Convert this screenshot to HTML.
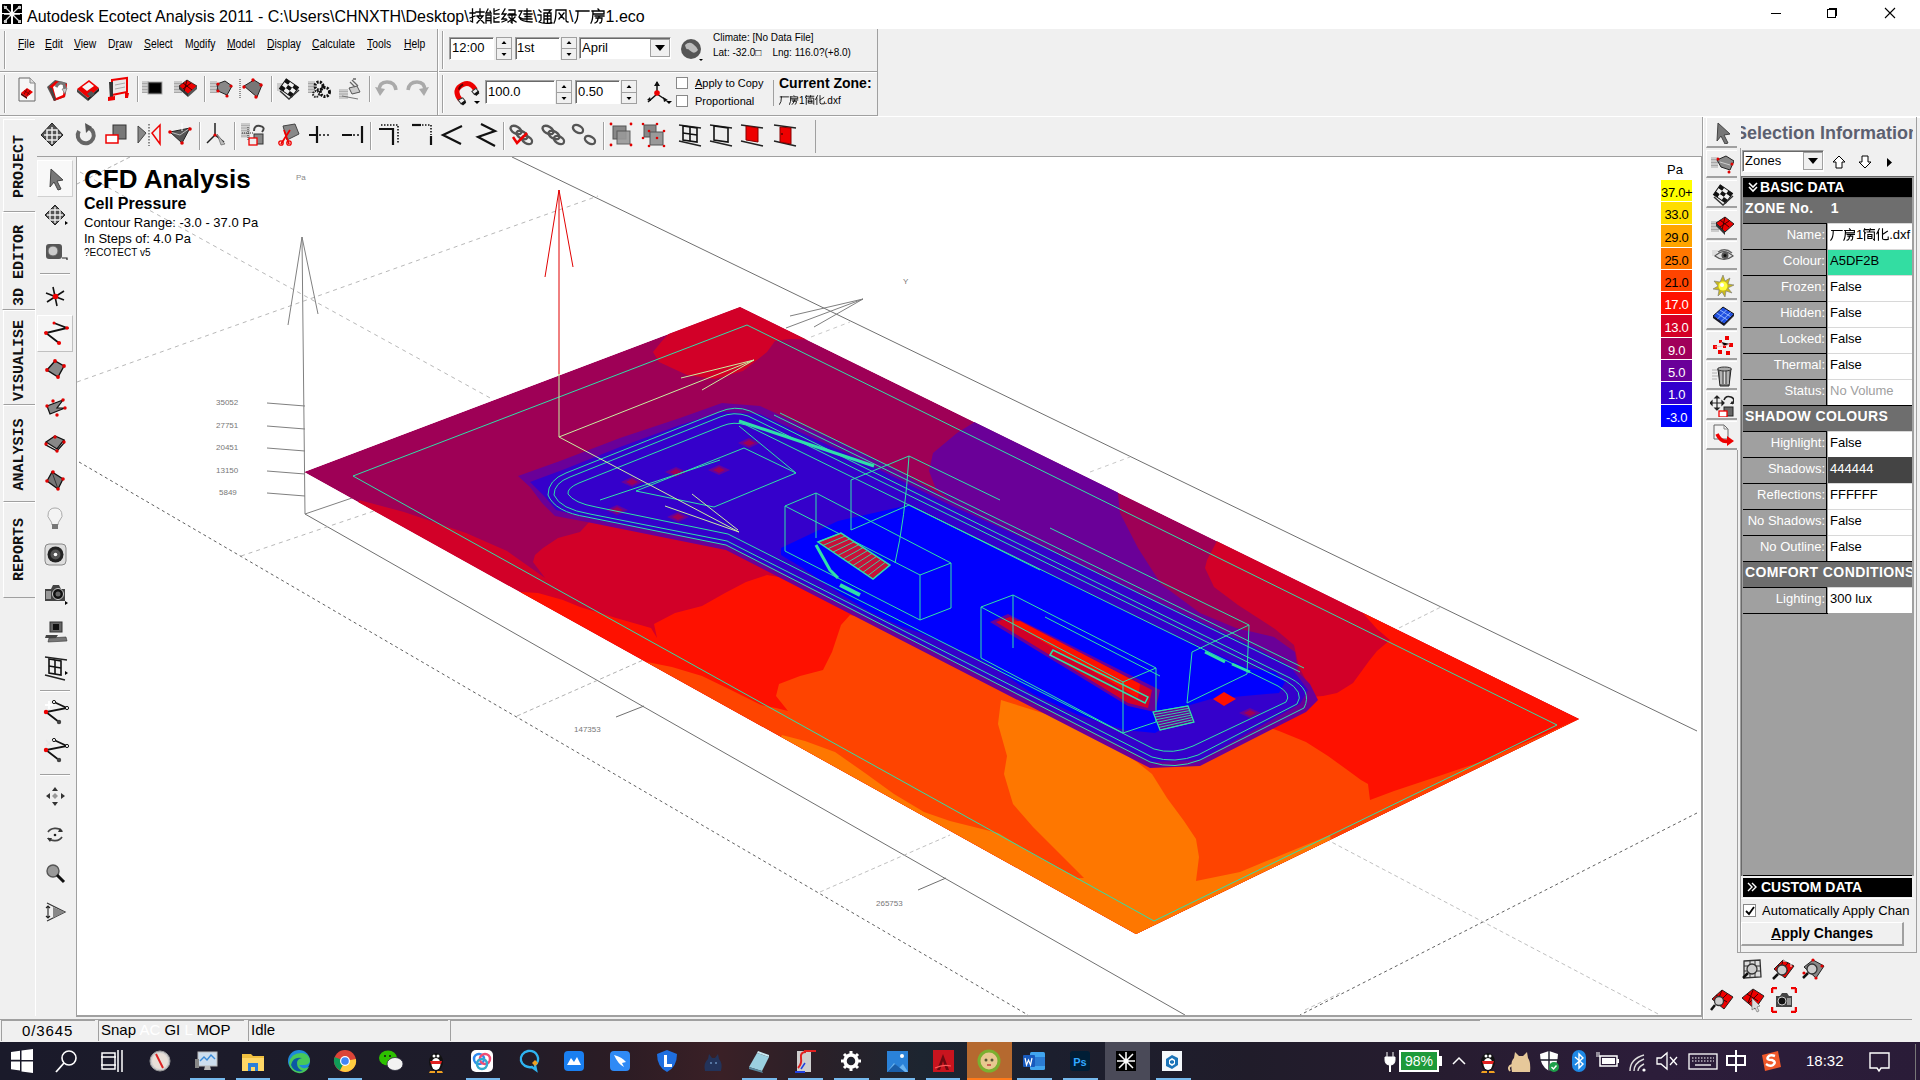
<!DOCTYPE html>
<html><head><meta charset="utf-8">
<style>
*{margin:0;padding:0;box-sizing:border-box}
html,body{width:1920px;height:1080px;overflow:hidden;background:#f0f0f0;font-family:"Liberation Sans",sans-serif;color:#000}
.a{position:absolute}
.t{position:absolute;white-space:nowrap;line-height:1}
.hl{position:absolute;height:1px}
.vl{position:absolute;width:1px}
.inp{position:absolute;background:#fff;border-top:1px solid #a0a0a0;border-left:1px solid #a0a0a0;border-bottom:1px solid #fff;border-right:1px solid #fff;box-shadow:inset 1px 1px 0 #696969}
.spin{position:absolute;background:#f0f0f0;border:1px solid #a0a0a0}
.row{position:absolute;left:1743px;width:169px;height:26px}
.lab{position:absolute;left:0;top:0;width:84px;height:26px;background:#a0a0a0;border-top:1px solid #000;border-right:1px solid #000;color:#fff;font-size:13px;text-align:right;padding-right:1px;line-height:22px}
.val{position:absolute;left:85px;top:0;width:84px;height:26px;background:#fff;border-top:1px solid #d8d8d8;font-size:13px;line-height:22px;padding-left:2px}
.sec{position:absolute;left:1743px;width:169px;height:26px;background:#6e6e6e;border-top:1px solid #000;color:#fff;font-weight:bold;font-size:14px;line-height:20px;padding-left:2px;letter-spacing:0.4px;white-space:nowrap;overflow:hidden}
</style></head><body>
<!-- TITLE BAR -->
<div class="a" style="left:0;top:0;width:1920px;height:29px;background:#fff"></div>
<svg class="a" style="left:2px;top:4px" width="20" height="20" viewBox="0 0 20 20"><rect x="0" y="0" width="9" height="9" rx="0.6" fill="#000"/><rect x="11" y="0" width="9" height="9" rx="0.6" fill="#000"/><rect x="0" y="10" width="9" height="10" rx="0.6" fill="#000"/><rect x="11" y="10" width="9" height="10" rx="0.6" fill="#000"/><path d="M2 2L18 18M18 2L2 18" stroke="#ddd" stroke-width="1.2"/><path d="M10 2v16M2 10h16" stroke="#fff" stroke-width="1.6"/><rect x="2" y="2" width="3" height="3" fill="#ccc"/><rect x="16" y="2" width="3" height="3" fill="#ccc"/><rect x="2" y="16" width="3" height="3" fill="#ccc"/><rect x="16" y="16" width="3" height="3" fill="#ccc"/><circle cx="10" cy="10" r="2.5" fill="#fff"/></svg>
<div class="t" style="left:27px;top:8px;font-size:16px;">Autodesk Ecotect Analysis 2011 - C:\Users\CHNXTH\Desktop\<svg style="display:inline-block;vertical-align:-1.9px" width="16" height="16" viewBox="0 0 16 16"><path d="M1 5h5M3.5 1v13l-2-1M1 10l5-2M7 4h8M11 1v6M8 8h6l-6 7M9 9l6 6" fill="none" stroke="#000" stroke-width="1.30" stroke-linecap="square"/></svg><svg style="display:inline-block;vertical-align:-1.9px" width="16" height="16" viewBox="0 0 16 16"><path d="M3 1l-2 4h5l-1-2M1 7h5v8M1 7v8M1 10h5M1 12.5h5M9 1v5h5M9 3.5l5-2M9 9v5h5M9 11l5-2" fill="none" stroke="#000" stroke-width="1.30" stroke-linecap="square"/></svg><svg style="display:inline-block;vertical-align:-1.9px" width="16" height="16" viewBox="0 0 16 16"><path d="M4 1L1 6h4L1 11h4M1 14l5-2M8 2h6v4H8M7 7h8M11 7v8l-1-1M8 9l2 2M14 9l-3 3M7 14l3-2M15 14l-3-2" fill="none" stroke="#000" stroke-width="1.30" stroke-linecap="square"/></svg><svg style="display:inline-block;vertical-align:-1.9px" width="16" height="16" viewBox="0 0 16 16"><path d="M2 3h3L2 9l4 2M2 9q2 5 13 5M7 3h7M10 1v11M7 6h8M8 8.5h6M7 11h8" fill="none" stroke="#000" stroke-width="1.30" stroke-linecap="square"/></svg>\<svg style="display:inline-block;vertical-align:-1.9px" width="16" height="16" viewBox="0 0 16 16"><path d="M2 2l2 2M1 7h3v5l-2 2q4 2 13 1M7 2h7l-2 2M7 5h7v9M7 5v9M7 8h7M7 11h7M10.5 5v9" fill="none" stroke="#000" stroke-width="1.30" stroke-linecap="square"/></svg><svg style="display:inline-block;vertical-align:-1.9px" width="16" height="16" viewBox="0 0 16 16"><path d="M3 2h10v10q0 2 2 2M3 2q0 10-2 13M6 5l5 6M11 5l-5 6" fill="none" stroke="#000" stroke-width="1.30" stroke-linecap="square"/></svg>\<svg style="display:inline-block;vertical-align:-1.9px" width="16" height="16" viewBox="0 0 16 16"><path d="M2 3h13M4 3q0 9-3 12" fill="none" stroke="#000" stroke-width="1.30" stroke-linecap="square"/></svg><svg style="display:inline-block;vertical-align:-1.9px" width="16" height="16" viewBox="0 0 16 16"><path d="M8 1l1 1M2 3h12v3H3M3 3q0 9-2 12M5 8h9M9 8v1M6 10h6q0 5-2 5M8 10q0 4-3 5" fill="none" stroke="#000" stroke-width="1.30" stroke-linecap="square"/></svg>1.eco</div>
<div class="a" style="left:1771px;top:13px;width:10px;height:1px;background:#000"></div>
<div class="a" style="left:1827px;top:9px;width:9px;height:9px;border:1px solid #000"></div>
<div class="a" style="left:1829px;top:8px;width:8px;height:8px;border-top:1px solid #000;border-right:1px solid #000"></div>
<svg class="a" style="left:1884px;top:7px" width="12" height="12"><path d="M1 1L11 11M11 1L1 11" stroke="#000" stroke-width="1.1"/></svg>


<!-- TOOLBARS -->
<div class="hl" style="left:0;top:71px;width:878px;background:#a0a0a0"></div>
<div class="hl" style="left:0;top:72px;width:877px;background:#fff"></div>
<div class="hl" style="left:0;top:115px;width:878px;background:#a0a0a0"></div>
<div class="hl" style="left:0;top:116px;width:1920px;background:#fff"></div>
<!-- grips -->
<div class="vl" style="left:4px;top:31px;height:38px;background:#a0a0a0"></div><div class="vl" style="left:5px;top:31px;height:38px;background:#fff"></div>
<div class="vl" style="left:4px;top:75px;height:38px;background:#a0a0a0"></div><div class="vl" style="left:5px;top:75px;height:38px;background:#fff"></div>
<div class="vl" style="left:437px;top:29px;height:86px;background:#a0a0a0"></div><div class="vl" style="left:438px;top:29px;height:86px;background:#fff"></div>
<div class="vl" style="left:442px;top:31px;height:38px;background:#a0a0a0"></div><div class="vl" style="left:443px;top:31px;height:38px;background:#fff"></div>
<div class="vl" style="left:442px;top:75px;height:38px;background:#a0a0a0"></div><div class="vl" style="left:443px;top:75px;height:38px;background:#fff"></div>
<div class="vl" style="left:877px;top:29px;height:86px;background:#a0a0a0"></div>
<!-- menu -->
<div class="t" style="left:18px;top:38px;font-size:12px;transform:scaleX(0.86);transform-origin:0 0;word-spacing:0"><u>F</u>ile</div>
<div class="t" style="left:45px;top:38px;font-size:12px;transform:scaleX(0.86);transform-origin:0 0"><u>E</u>dit</div>
<div class="t" style="left:74px;top:38px;font-size:12px;transform:scaleX(0.86);transform-origin:0 0"><u>V</u>iew</div>
<div class="t" style="left:108px;top:38px;font-size:12px;transform:scaleX(0.86);transform-origin:0 0">D<u>r</u>aw</div>
<div class="t" style="left:144px;top:38px;font-size:12px;transform:scaleX(0.86);transform-origin:0 0"><u>S</u>elect</div>
<div class="t" style="left:185px;top:38px;font-size:12px;transform:scaleX(0.86);transform-origin:0 0">M<u>o</u>dify</div>
<div class="t" style="left:227px;top:38px;font-size:12px;transform:scaleX(0.86);transform-origin:0 0"><u>M</u>odel</div>
<div class="t" style="left:267px;top:38px;font-size:12px;transform:scaleX(0.86);transform-origin:0 0"><u>D</u>isplay</div>
<div class="t" style="left:312px;top:38px;font-size:12px;transform:scaleX(0.86);transform-origin:0 0"><u>C</u>alculate</div>
<div class="t" style="left:367px;top:38px;font-size:12px;transform:scaleX(0.86);transform-origin:0 0"><u>T</u>ools</div>
<div class="t" style="left:404px;top:38px;font-size:12px;transform:scaleX(0.86);transform-origin:0 0"><u>H</u>elp</div>
<!-- row1 controls -->
<div class="inp" style="left:449px;top:37px;width:45px;height:23px"></div><div class="t" style="left:452px;top:41px;font-size:13px">12:00</div>
<div class="spin" style="left:496px;top:37px;width:16px;height:23px"></div><div class="hl" style="left:497px;top:48px;width:14px;background:#a0a0a0"></div>
<div class="inp" style="left:515px;top:37px;width:45px;height:23px"></div><div class="t" style="left:517px;top:41px;font-size:13px">1st</div>
<div class="spin" style="left:561px;top:37px;width:16px;height:23px"></div><div class="hl" style="left:562px;top:48px;width:14px;background:#a0a0a0"></div>
<div class="inp" style="left:579px;top:37px;width:92px;height:22px"></div><div class="t" style="left:582px;top:41px;font-size:13px">April</div>
<div class="a" style="left:650px;top:39px;width:20px;height:18px;background:#f0f0f0;border:1px solid #a0a0a0"></div>
<svg class="a" style="left:655px;top:45px" width="10" height="6"><path d="M0 0H10L5 6Z" fill="#000"/></svg>
<svg class="a" style="left:680px;top:38px" width="24" height="26" viewBox="0 0 24 26"><circle cx="11" cy="11" r="10" fill="#555"/><path d="M5 7q4-4 8-1t5 6q-3 4-6 2t-4-3q-2 1-3-4z" fill="#bbb"/><path d="M19 21h4l-2 2z" fill="#000"/></svg>
<div class="t" style="left:713px;top:33px;font-size:10px">Climate: [No Data File]</div>
<div class="t" style="left:713px;top:48px;font-size:10px">Lat: -32.0&#9633;&nbsp;&nbsp;&nbsp; Lng: 116.0?(+8.0)</div>
<!-- row2 controls -->
<div class="inp" style="left:485px;top:80px;width:70px;height:24px"></div><div class="t" style="left:488px;top:85px;font-size:13px">100.0</div>
<div class="spin" style="left:556px;top:80px;width:16px;height:24px"></div><div class="hl" style="left:557px;top:92px;width:14px;background:#a0a0a0"></div>
<div class="inp" style="left:575px;top:80px;width:45px;height:24px"></div><div class="t" style="left:578px;top:85px;font-size:13px">0.50</div>
<div class="spin" style="left:621px;top:80px;width:16px;height:24px"></div><div class="hl" style="left:622px;top:92px;width:14px;background:#a0a0a0"></div>
<div class="a" style="left:676px;top:77px;width:12px;height:12px;background:#fff;border:1px solid #888"></div>
<div class="a" style="left:676px;top:95px;width:12px;height:12px;background:#fff;border:1px solid #888"></div>
<div class="t" style="left:695px;top:78px;font-size:11px"><u>A</u>pply to Copy</div>
<div class="t" style="left:695px;top:96px;font-size:11px">Proportional</div>
<div class="vl" style="left:773px;top:80px;height:26px;background:#a0a0a0"></div>
<div class="t" style="left:779px;top:76px;font-size:14px;font-weight:bold">Current Zone:</div>
<div class="t" style="left:779px;top:95px;font-size:10px"><svg style="display:inline-block;vertical-align:-1.2px" width="10" height="10" viewBox="0 0 16 16"><path d="M2 3h13M4 3q0 9-3 12" fill="none" stroke="#000" stroke-width="1.36" stroke-linecap="square"/></svg><svg style="display:inline-block;vertical-align:-1.2px" width="10" height="10" viewBox="0 0 16 16"><path d="M8 1l1 1M2 3h12v3H3M3 3q0 9-2 12M5 8h9M9 8v1M6 10h6q0 5-2 5M8 10q0 4-3 5" fill="none" stroke="#000" stroke-width="1.36" stroke-linecap="square"/></svg>1<svg style="display:inline-block;vertical-align:-1.2px" width="10" height="10" viewBox="0 0 16 16"><path d="M2 1l-1 3M2 2h5M9 1l-1 3M9 2h5M2 5v10M2 5l1 1M5 5h9v10l-1-1M6 8h5v5H6zM6 10.5h5" fill="none" stroke="#000" stroke-width="1.36" stroke-linecap="square"/></svg><svg style="display:inline-block;vertical-align:-1.2px" width="10" height="10" viewBox="0 0 16 16"><path d="M4 1L1 7M3 5v10M8 1v12q0 2 7 1v-3M14 4l-6 4" fill="none" stroke="#000" stroke-width="1.36" stroke-linecap="square"/></svg>.dxf</div>
<!-- row3 -->
<div class="hl" style="left:37px;top:156px;width:1663px;background:#a0a0a0"></div>
<div class="vl" style="left:815px;top:120px;height:33px;background:#a0a0a0"></div>


<svg class="a" style="left:13px;top:76px" width="26" height="26" viewBox="0 0 26 26"><path d="M6 2h11l5 5v18H6z" fill="#f6f6f6" stroke="#666"/><path d="M17 2v5h5" fill="#ddd" stroke="#888"/><path d="M8 17l6-5 6 4-6 5z" fill="#e00"/><path d="M8 17l6 4v2l-6-4z" fill="#500"/><path d="M11 14.5l6 4M14 13l-3 5.5M17 14.5l-3 5" stroke="#600" stroke-width="0.8"/></svg>
<svg class="a" style="left:44px;top:76px" width="26" height="26" viewBox="0 0 26 26"><path d="M3 11l8-7 12 3-2 14-11 4z" fill="#555"/><path d="M5 11l7-6 11 3-2 13-11 4z" fill="#e00"/><path d="M9 11l5-4 7 2-2 10-7 3z" fill="#fff"/><path d="M5 11l5 14 2-1-4-12z" fill="#444"/><path d="M12 11q3-6 8-3l1 6" fill="none" stroke="#777" stroke-width="3"/><path d="M18 13l5-1-2 6z" fill="#ccc" stroke="#666" stroke-width="0.6"/></svg>
<svg class="a" style="left:75px;top:76px" width="26" height="26" viewBox="0 0 26 26"><path d="M2 13l12-9 10 8-11 10z" fill="#e00"/><path d="M2 13l11 9v3L2 16z" fill="#444"/><path d="M13 22l11-10v3L13 25z" fill="#222"/><path d="M7 11l7-5 5 4-7 5z" fill="#f4f4f4"/><path d="M12 18l4-3 4 3-4 3z" fill="#555"/></svg>
<svg class="a" style="left:106px;top:76px" width="26" height="26" viewBox="0 0 26 26"><path d="M6 4l15-2v14L6 19z" fill="#e8e8e8" stroke="#e00" stroke-width="2"/><path d="M3 6h4v18H4z" fill="#333"/><path d="M2 21l7-1v4l-7 1z" fill="#e00"/><path d="M19 17h4l-1 5h-3z" fill="#e00"/><path d="M9 9l10-2M9 13l10-2" stroke="#aaa"/></svg>
<svg class="a" style="left:141px;top:76px" width="26" height="26" viewBox="0 0 26 26"><line x1="1" y1="6.0" x2="8" y2="6.0" stroke="#777" stroke-width="0.6"/><line x1="1" y1="7.5" x2="8" y2="7.5" stroke="#777" stroke-width="0.6"/><line x1="1" y1="9.0" x2="8" y2="9.0" stroke="#777" stroke-width="0.6"/><line x1="1" y1="10.5" x2="8" y2="10.5" stroke="#777" stroke-width="0.6"/><line x1="1" y1="12.0" x2="8" y2="12.0" stroke="#777" stroke-width="0.6"/><line x1="1" y1="13.5" x2="8" y2="13.5" stroke="#777" stroke-width="0.6"/><line x1="1" y1="15.0" x2="8" y2="15.0" stroke="#777" stroke-width="0.6"/><line x1="1" y1="16.5" x2="8" y2="16.5" stroke="#777" stroke-width="0.6"/><rect x="7" y="6" width="14" height="12" fill="#111" stroke="#aaa"/><rect x="9" y="8" width="10" height="8" fill="#000"/></svg>
<svg class="a" style="left:173px;top:76px" width="26" height="26" viewBox="0 0 26 26"><line x1="1" y1="6.0" x2="9" y2="6.0" stroke="#777" stroke-width="0.6"/><line x1="1" y1="7.5" x2="9" y2="7.5" stroke="#777" stroke-width="0.6"/><line x1="1" y1="9.0" x2="9" y2="9.0" stroke="#777" stroke-width="0.6"/><line x1="1" y1="10.5" x2="9" y2="10.5" stroke="#777" stroke-width="0.6"/><line x1="1" y1="12.0" x2="9" y2="12.0" stroke="#777" stroke-width="0.6"/><line x1="1" y1="13.5" x2="9" y2="13.5" stroke="#777" stroke-width="0.6"/><line x1="1" y1="15.0" x2="9" y2="15.0" stroke="#777" stroke-width="0.6"/><line x1="1" y1="16.5" x2="9" y2="16.5" stroke="#777" stroke-width="0.6"/><path d="M6 10l8-6 10 6-9 8z" fill="#e00" stroke="#222" stroke-width="0.8"/><path d="M10 7l9 7M14 4l-3 12M18 7l-8 6" stroke="#400" stroke-width="1"/><path d="M6 10l9 8 0 3-9-8z" fill="#333"/><path d="M15 18l9-8v3l-9 8z" fill="#555"/></svg>
<svg class="a" style="left:209px;top:76px" width="26" height="26" viewBox="0 0 26 26"><line x1="1" y1="6.0" x2="8" y2="6.0" stroke="#777" stroke-width="0.6"/><line x1="1" y1="7.5" x2="8" y2="7.5" stroke="#777" stroke-width="0.6"/><line x1="1" y1="9.0" x2="8" y2="9.0" stroke="#777" stroke-width="0.6"/><line x1="1" y1="10.5" x2="8" y2="10.5" stroke="#777" stroke-width="0.6"/><line x1="1" y1="12.0" x2="8" y2="12.0" stroke="#777" stroke-width="0.6"/><line x1="1" y1="13.5" x2="8" y2="13.5" stroke="#777" stroke-width="0.6"/><line x1="1" y1="15.0" x2="8" y2="15.0" stroke="#777" stroke-width="0.6"/><line x1="1" y1="16.5" x2="8" y2="16.5" stroke="#777" stroke-width="0.6"/><path d="M8 8l8-3 7 5-5 9-9-4z" fill="#888" stroke="#222"/><path d="M8 15l1-7" stroke="#333"/><circle cx="9" cy="8" r="1.6" fill="#e00000"/><circle cx="22" cy="10" r="1.6" fill="#e00000"/><circle cx="18" cy="20" r="1.6" fill="#e00000"/><circle cx="9" cy="15" r="1.6" fill="#e00000"/></svg>
<svg class="a" style="left:239px;top:76px" width="26" height="26" viewBox="0 0 26 26"><path d="M1 3v20" stroke="#333" stroke-dasharray="1 1"/><path d="M5 10l10-6 8 5-5 12z" fill="#777" stroke="#222"/><circle cx="5" cy="11" r="1.7" fill="#e00000"/><circle cx="14" cy="4" r="1.7" fill="#e00000"/><circle cx="22" cy="9" r="1.7" fill="#e00000"/><circle cx="17" cy="21" r="1.7" fill="#e00000"/></svg>
<svg class="a" style="left:276px;top:76px" width="26" height="26" viewBox="0 0 26 26"><path d="M1 8h6M1 10h5M1 12h6M1 14h5" stroke="#888" stroke-width="0.7"/><g transform="translate(13,12) rotate(35) scale(1,0.8)"><rect x="-7.5" y="-7.5" width="5" height="5" fill="#111"/><rect x="-2.5" y="-7.5" width="5" height="5" fill="#f0f0f0"/><rect x="2.5" y="-7.5" width="5" height="5" fill="#111"/><rect x="-7.5" y="-2.5" width="5" height="5" fill="#f0f0f0"/><rect x="-2.5" y="-2.5" width="5" height="5" fill="#111"/><rect x="2.5" y="-2.5" width="5" height="5" fill="#f0f0f0"/><rect x="-7.5" y="2.5" width="5" height="5" fill="#111"/><rect x="-2.5" y="2.5" width="5" height="5" fill="#f0f0f0"/><rect x="2.5" y="2.5" width="5" height="5" fill="#111"/><rect x="-7.5" y="-7.5" width="15" height="15" fill="none" stroke="#111" stroke-width="1"/></g><path d="M4 15l9 8 10-9" stroke="#333" stroke-width="1.5" fill="none"/></svg>
<svg class="a" style="left:307px;top:76px" width="26" height="26" viewBox="0 0 26 26"><line x1="1" y1="6.0" x2="8" y2="6.0" stroke="#777" stroke-width="0.6"/><line x1="1" y1="7.5" x2="8" y2="7.5" stroke="#777" stroke-width="0.6"/><line x1="1" y1="9.0" x2="8" y2="9.0" stroke="#777" stroke-width="0.6"/><line x1="1" y1="10.5" x2="8" y2="10.5" stroke="#777" stroke-width="0.6"/><line x1="1" y1="12.0" x2="8" y2="12.0" stroke="#777" stroke-width="0.6"/><line x1="1" y1="13.5" x2="8" y2="13.5" stroke="#777" stroke-width="0.6"/><line x1="1" y1="15.0" x2="8" y2="15.0" stroke="#777" stroke-width="0.6"/><line x1="1" y1="16.5" x2="8" y2="16.5" stroke="#777" stroke-width="0.6"/><circle cx="12" cy="10" r="4" fill="none" stroke="#111" stroke-width="3" stroke-dasharray="2 1.2"/><circle cx="18" cy="16" r="4.5" fill="none" stroke="#111" stroke-width="3" stroke-dasharray="2 1.2"/><circle cx="9" cy="18" r="3" fill="none" stroke="#222" stroke-width="2" stroke-dasharray="1.5 1"/></svg>
<svg class="a" style="left:338px;top:76px" width="26" height="26" viewBox="0 0 26 26"><line x1="1" y1="14.0" x2="10" y2="14.0" stroke="#777" stroke-width="0.6"/><line x1="1" y1="15.6" x2="10" y2="15.6" stroke="#777" stroke-width="0.6"/><line x1="1" y1="17.2" x2="10" y2="17.2" stroke="#777" stroke-width="0.6"/><line x1="1" y1="18.8" x2="10" y2="18.8" stroke="#777" stroke-width="0.6"/><line x1="1" y1="20.4" x2="10" y2="20.4" stroke="#777" stroke-width="0.6"/><line x1="1" y1="22.0" x2="10" y2="22.0" stroke="#777" stroke-width="0.6"/><path d="M11 12l8-2 3 6-8 2z" fill="#ccc" stroke="#555"/><path d="M14 4l6 6M12 6l5 5M15 3h3" stroke="#666" stroke-width="1.3"/><path d="M4 20l16 3" stroke="#777"/></svg>
<svg class="a" style="left:374px;top:76px" width="26" height="26" viewBox="0 0 26 26"><path d="M5 15q0-9 8-9q8 0 9 8" fill="none" stroke="#aaa" stroke-width="3.5"/><path d="M1 11l5 9 5-7z" fill="#aaa"/></svg>
<svg class="a" style="left:404px;top:76px" width="26" height="26" viewBox="0 0 26 26"><path d="M21 15q0-9-8-9q-8 0-9 8" fill="none" stroke="#aaa" stroke-width="3.5"/><path d="M25 11l-5 9-5-7z" fill="#aaa"/></svg>
<div class="vl" style="left:137px;top:76px;height:26px;background:#a0a0a0"></div><div class="vl" style="left:138px;top:76px;height:26px;background:#fff"></div>
<div class="vl" style="left:204px;top:76px;height:26px;background:#a0a0a0"></div><div class="vl" style="left:205px;top:76px;height:26px;background:#fff"></div>
<div class="vl" style="left:271px;top:76px;height:26px;background:#a0a0a0"></div><div class="vl" style="left:272px;top:76px;height:26px;background:#fff"></div>
<div class="vl" style="left:369px;top:76px;height:26px;background:#a0a0a0"></div><div class="vl" style="left:370px;top:76px;height:26px;background:#fff"></div>
<svg class="a" style="left:39px;top:122px" width="26" height="26" viewBox="0 0 26 26"><path d="M13 1l11 12-11 11L2 13z" fill="#555" stroke="#222"/><path d="M8 8h10v10H8z" fill="none" stroke="#eee" stroke-width="1.5"/><path d="M13 5v17M5 13h17" stroke="#eee" stroke-width="1.5"/></svg>
<svg class="a" style="left:72px;top:122px" width="26" height="26" viewBox="0 0 26 26"><path d="M7 9a8 8 0 1 0 10-3" fill="none" stroke="#666" stroke-width="4"/><path d="M13 1l7 4-6 6z" fill="#555"/></svg>
<svg class="a" style="left:103px;top:122px" width="26" height="26" viewBox="0 0 26 26"><rect x="10" y="3" width="13" height="14" fill="#777" stroke="#333"/><rect x="3" y="13" width="12" height="8" fill="#fff" stroke="#e00" stroke-width="1.5"/></svg>
<svg class="a" style="left:136px;top:122px" width="26" height="26" viewBox="0 0 26 26"><path d="M2 4l8 7-8 10z" fill="#888" stroke="#444"/><path d="M13 2v22" stroke="#222" stroke-dasharray="1.5 1.5"/><path d="M24 3l-8 8 8 11z" fill="none" stroke="#e00" stroke-width="1.5"/></svg>
<svg class="a" style="left:168px;top:122px" width="26" height="26" viewBox="0 0 26 26"><path d="M2 10l20-4-8 15z" fill="#555" stroke="#222"/><path d="M2 10l10 3 10-7" stroke="#bbb" fill="none"/><path d="M14 1v8" stroke="#fff"/><circle cx="2" cy="10" r="1.8" fill="#e00000"/><circle cx="22" cy="7" r="1.8" fill="#e00000"/><circle cx="14" cy="21" r="1.8" fill="#e00000"/></svg>
<svg class="a" style="left:203px;top:122px" width="26" height="26" viewBox="0 0 26 26"><path d="M12 1v12l-8 8M12 13l9 7" stroke="#222" stroke-width="1.5" fill="none"/><path d="M14 12l8 10-4 1z" fill="#bbb" stroke="#555" stroke-width="0.6"/><circle cx="12" cy="13" r="1.6" fill="#e00000"/></svg>
<svg class="a" style="left:240px;top:122px" width="26" height="26" viewBox="0 0 26 26"><line x1="1" y1="2.0" x2="10" y2="2.0" stroke="#777" stroke-width="0.6"/><line x1="1" y1="3.6" x2="10" y2="3.6" stroke="#777" stroke-width="0.6"/><line x1="1" y1="5.2" x2="10" y2="5.2" stroke="#777" stroke-width="0.6"/><line x1="1" y1="6.800000000000001" x2="10" y2="6.800000000000001" stroke="#777" stroke-width="0.6"/><line x1="1" y1="8.4" x2="10" y2="8.4" stroke="#777" stroke-width="0.6"/><line x1="1" y1="10.0" x2="10" y2="10.0" stroke="#777" stroke-width="0.6"/><line x1="1" y1="11.600000000000001" x2="10" y2="11.600000000000001" stroke="#777" stroke-width="0.6"/><line x1="1" y1="13.200000000000001" x2="10" y2="13.200000000000001" stroke="#777" stroke-width="0.6"/><line x1="1" y1="14.8" x2="10" y2="14.8" stroke="#777" stroke-width="0.6"/><path d="M14 9q0-6 6-5t2 6" fill="none" stroke="#444" stroke-width="2"/><rect x="14" y="12" width="9" height="10" fill="#888" stroke="#333"/><rect x="9" y="16" width="8" height="7" fill="#eee" stroke="#e00" stroke-width="1.3"/><path d="M2 11h12M8 5v13" stroke="#333" stroke-dasharray="1 1"/></svg>
<svg class="a" style="left:275px;top:122px" width="26" height="26" viewBox="0 0 26 26"><path d="M8 4l12-2 4 10-12 6z" fill="#888" stroke="#444"/><path d="M15 8l-9 14M9 8l5 14" stroke="#e00" stroke-width="1.8"/><circle cx="6" cy="21" r="2.2" fill="none" stroke="#e00" stroke-width="1.3"/><circle cx="14" cy="21" r="2.2" fill="none" stroke="#e00" stroke-width="1.3"/></svg>
<svg class="a" style="left:307px;top:122px" width="26" height="26" viewBox="0 0 26 26"><path d="M10 4v17M2 13h8" stroke="#111" stroke-width="2.2"/><path d="M12 13h12" stroke="#111" stroke-width="1.6" stroke-dasharray="2 2"/></svg>
<svg class="a" style="left:340px;top:122px" width="26" height="26" viewBox="0 0 26 26"><path d="M22 4v17M2 13h10" stroke="#111" stroke-width="2.2"/><path d="M13 13h8" stroke="#111" stroke-width="1.6" stroke-dasharray="2 2"/></svg>
<svg class="a" style="left:376px;top:122px" width="26" height="26" viewBox="0 0 26 26"><path d="M3 7h14v16" fill="none" stroke="#111" stroke-width="2.2"/><path d="M5 3h17v18" fill="none" stroke="#111" stroke-width="1.6" stroke-dasharray="1.5 1.5"/></svg>
<svg class="a" style="left:409px;top:122px" width="26" height="26" viewBox="0 0 26 26"><path d="M3 3h9" stroke="#111" stroke-width="2.2"/><path d="M13 3h9v10" fill="none" stroke="#111" stroke-width="1.6" stroke-dasharray="1.5 1.5"/><path d="M22 14v9" stroke="#111" stroke-width="2.2"/></svg>
<svg class="a" style="left:440px;top:122px" width="26" height="26" viewBox="0 0 26 26"><path d="M22 4L3 13l18 9" fill="none" stroke="#111" stroke-width="2.2"/></svg>
<svg class="a" style="left:473px;top:122px" width="26" height="26" viewBox="0 0 26 26"><path d="M8 2l14 7-17 6 17 9" fill="none" stroke="#111" stroke-width="2.2"/></svg>
<svg class="a" style="left:508px;top:122px" width="26" height="26" viewBox="0 0 26 26"><g fill="none" stroke="#555" stroke-width="2.4"><ellipse cx="8" cy="8" rx="6" ry="3.5" transform="rotate(30 8 8)"/><ellipse cx="14" cy="13" rx="6" ry="3.5" transform="rotate(30 14 13)"/><ellipse cx="19" cy="18" rx="5.5" ry="3.5" transform="rotate(30 19 18)"/></g><path d="M5 15l4 6 10-10" fill="none" stroke="#e00" stroke-width="2.5"/></svg>
<svg class="a" style="left:540px;top:122px" width="26" height="26" viewBox="0 0 26 26"><g fill="none" stroke="#555" stroke-width="2.4"><ellipse cx="8" cy="8" rx="6" ry="3.5" transform="rotate(30 8 8)"/><ellipse cx="14" cy="13" rx="6" ry="3.5" transform="rotate(30 14 13)"/><ellipse cx="19" cy="18" rx="5.5" ry="3.5" transform="rotate(30 19 18)"/></g></svg>
<svg class="a" style="left:571px;top:122px" width="26" height="26" viewBox="0 0 26 26"><g fill="none" stroke="#555" stroke-width="2.4"><ellipse cx="7" cy="7" rx="5.5" ry="3.5" transform="rotate(30 7 7)"/><ellipse cx="19" cy="18" rx="5.5" ry="3.5" transform="rotate(30 19 18)"/></g></svg>
<svg class="a" style="left:608px;top:122px" width="26" height="26" viewBox="0 0 26 26"><rect x="5" y="4" width="13" height="13" fill="#888" stroke="#555"/><rect x="9" y="9" width="13" height="13" fill="#999" stroke="#555" opacity="0.9"/><circle cx="3" cy="2" r="1.4" fill="#e00000"/><circle cx="23" cy="2" r="1.4" fill="#e00000"/><circle cx="3" cy="23" r="1.4" fill="#e00000"/><circle cx="23" cy="23" r="1.4" fill="#e00000"/></svg>
<svg class="a" style="left:640px;top:122px" width="26" height="26" viewBox="0 0 26 26"><rect x="4" y="3" width="12" height="12" fill="#888" stroke="#555"/><rect x="10" y="10" width="13" height="13" fill="#999" stroke="#555"/><circle cx="3" cy="2" r="1.3" fill="#e00000"/><circle cx="17" cy="2" r="1.3" fill="#e00000"/><circle cx="3" cy="16" r="1.3" fill="#e00000"/><circle cx="9" cy="9" r="1.3" fill="#e00000"/><circle cx="24" cy="9" r="1.3" fill="#e00000"/><circle cx="9" cy="24" r="1.3" fill="#e00000"/><circle cx="24" cy="24" r="1.3" fill="#e00000"/><circle cx="17" cy="16" r="1.3" fill="#e00000"/></svg>
<svg class="a" style="left:677px;top:122px" width="26" height="26" viewBox="0 0 26 26"><path d="M2 3l22 3M2 19l22 5" stroke="#222" stroke-width="1.5"/><path d="M6 4l14 2v14l-14-2z" fill="#eee" stroke="#111" stroke-width="1.6"/><path d="M13 5v14M6 11l14 2" stroke="#111" stroke-width="1.6"/></svg>
<svg class="a" style="left:708px;top:122px" width="26" height="26" viewBox="0 0 26 26"><path d="M2 3l22 3M2 19l22 5" stroke="#222" stroke-width="1.5"/><path d="M6 4l14 2v14l-14-2z" fill="#eee" stroke="#111" stroke-width="1.6"/></svg>
<svg class="a" style="left:739px;top:122px" width="26" height="26" viewBox="0 0 26 26"><path d="M2 3l22 3M2 19l22 5" stroke="#222" stroke-width="1.5"/><path d="M7 4l12 2v14l-12-2z" fill="#e00" stroke="#800"/></svg>
<svg class="a" style="left:772px;top:122px" width="26" height="26" viewBox="0 0 26 26"><path d="M2 3l22 3M2 19l22 5" stroke="#222" stroke-width="1.5"/><path d="M8 5l11 1v16l-11-2z" fill="#e00" stroke="#800"/><circle cx="10" cy="12" r="0.8" fill="#000"/></svg>
<div class="vl" style="left:199px;top:122px;height:28px;background:#a0a0a0"></div><div class="vl" style="left:200px;top:122px;height:28px;background:#fff"></div>
<div class="vl" style="left:234px;top:122px;height:28px;background:#a0a0a0"></div><div class="vl" style="left:235px;top:122px;height:28px;background:#fff"></div>
<div class="vl" style="left:370px;top:122px;height:28px;background:#a0a0a0"></div><div class="vl" style="left:371px;top:122px;height:28px;background:#fff"></div>
<div class="vl" style="left:503px;top:122px;height:28px;background:#a0a0a0"></div><div class="vl" style="left:504px;top:122px;height:28px;background:#fff"></div>
<div class="vl" style="left:603px;top:122px;height:28px;background:#a0a0a0"></div><div class="vl" style="left:604px;top:122px;height:28px;background:#fff"></div>
<svg class="a" style="left:452px;top:79px" width="30" height="28" viewBox="0 0 30 28"><g transform="rotate(-25 14 14)"><path d="M6 18q-3-13 9-13q8 0 9 10" fill="none" stroke="#e00" stroke-width="5"/><path d="M15 5q-4 0-6 3" stroke="#600" stroke-width="2" fill="none"/><path d="M4 17l5 0 1 4-5 1z" fill="#eee" stroke="#333"/><path d="M20 15l5-1 1 4-5 1z" fill="#eee" stroke="#333"/><path d="M5 21l5-1v3l-4 1zM21 18l5-1v3l-4 1z" fill="#111"/></g><path d="M22 22h6l-3 3z" fill="#000"/></svg>
<svg class="a" style="left:646px;top:80px" width="28" height="26" viewBox="0 0 28 26"><path d="M11 2v12M11 14l-9 8M11 14l9 6" stroke="#111" stroke-width="1.5"/><path d="M8 6l3-5 3 5zM1 20l3-3 1 4zM17 17l5 3-4 2z" fill="#111"/><circle cx="11" cy="13" r="2.8" fill="#e00"/><path d="M20 21h6l-3 3z" fill="#000"/></svg>
<svg class="a" style="left:496px;top:37px" width="16" height="23"><path d="M5.5 7h5l-2.5-3z M5.5 16h5l-2.5 3z" fill="#000"/></svg>
<svg class="a" style="left:561px;top:37px" width="16" height="23"><path d="M5.5 7h5l-2.5-3z M5.5 16h5l-2.5 3z" fill="#000"/></svg>
<svg class="a" style="left:556px;top:80px" width="16" height="24"><path d="M5.5 8h5l-2.5-3z M5.5 17h5l-2.5 3z" fill="#000"/></svg>
<svg class="a" style="left:621px;top:80px" width="16" height="24"><path d="M5.5 8h5l-2.5-3z M5.5 17h5l-2.5 3z" fill="#000"/></svg>
<div class="a" style="left:3px;top:119px;width:32px;height:93px;background:#f0f0f0;border-left:1px solid #fff;border-top:1px solid #fff;border-bottom:1px solid #a0a0a0"></div>
<div class="t" style="left:-41px;top:159px;width:120px;text-align:center;font-family:'Liberation Mono',monospace;font-weight:bold;font-size:15px;letter-spacing:0px;color:#111;transform:rotate(-90deg)">PROJECT</div>
<div class="a" style="left:2px;top:212px;width:34px;height:98px;background:#f0f0f0;border-left:1px solid #fff;border-top:1px solid #fff;border-bottom:1px solid #a0a0a0"></div>
<div class="t" style="left:-41px;top:258px;width:120px;text-align:center;font-family:'Liberation Mono',monospace;font-weight:bold;font-size:15px;letter-spacing:0px;color:#111;transform:rotate(-90deg)">3D EDITOR</div>
<div class="a" style="left:3px;top:310px;width:32px;height:95px;background:#f0f0f0;border-left:1px solid #fff;border-top:1px solid #fff;border-bottom:1px solid #a0a0a0"></div>
<div class="t" style="left:-41px;top:353px;width:120px;text-align:center;font-family:'Liberation Mono',monospace;font-weight:bold;font-size:15px;letter-spacing:0px;color:#111;transform:rotate(-90deg)">VISUALISE</div>
<div class="a" style="left:3px;top:405px;width:32px;height:97px;background:#f0f0f0;border-left:1px solid #fff;border-top:1px solid #fff;border-bottom:1px solid #a0a0a0"></div>
<div class="t" style="left:-41px;top:447px;width:120px;text-align:center;font-family:'Liberation Mono',monospace;font-weight:bold;font-size:15px;letter-spacing:0px;color:#111;transform:rotate(-90deg)">ANALYSIS</div>
<div class="a" style="left:3px;top:502px;width:32px;height:96px;background:#f0f0f0;border-left:1px solid #fff;border-top:1px solid #fff;border-bottom:1px solid #a0a0a0"></div>
<div class="t" style="left:-41px;top:542px;width:120px;text-align:center;font-family:'Liberation Mono',monospace;font-weight:bold;font-size:15px;letter-spacing:0px;color:#111;transform:rotate(-90deg)">REPORTS</div>
<div class="vl" style="left:35px;top:212px;height:804px;background:#fff"></div>
<div class="a" style="left:37px;top:160px;width:36px;height:37px;background:#f8f8f8;border:1px solid #fff;border-right-color:#d0d0d0;border-bottom-color:#d0d0d0"></div>
<div class="a" style="left:37px;top:315px;width:36px;height:37px;background:#f4f4f4;border:1px solid #fff;border-right-color:#c0c0c0;border-bottom-color:#c0c0c0"></div>
<svg class="a" style="left:43px;top:166px" width="26" height="26" viewBox="0 0 26 26"><path d="M8 3l12 11-6 1 4 8-3 1-4-8-4 5z" fill="#777" stroke="#444"/></svg>
<svg class="a" style="left:43px;top:203px" width="26" height="26" viewBox="0 0 26 26"><path d="M12 2l10 10-10 10L2 12z" fill="#555" stroke="#222"/><path d="M7 7h10v10H7z" fill="none" stroke="#eee" stroke-width="1.4"/><path d="M12 4v16M4 12h16" stroke="#eee" stroke-width="1.4"/><path d="M22 18l3 2-3 2z" fill="#000"/></svg>
<svg class="a" style="left:43px;top:239px" width="26" height="26" viewBox="0 0 26 26"><rect x="3" y="5" width="16" height="15" rx="3" fill="#555"/><circle cx="10" cy="12" r="5" fill="#ccc" stroke="#666"/><path d="M19 19h5v2" stroke="#222" fill="none" stroke-width="1.2"/></svg>
<svg class="a" style="left:43px;top:284px" width="26" height="26" viewBox="0 0 26 26"><path d="M10 3l4 19M3 9l18 7M21 7L4 18" stroke="#111" stroke-width="1.6"/><circle cx="12.5" cy="12.5" r="2.8" fill="#e00"/></svg>
<svg class="a" style="left:43px;top:320px" width="26" height="26" viewBox="0 0 26 26"><path d="M11 3L24 8L3 13L16 23" stroke="#111" stroke-width="1.8" fill="none"/><circle cx="11" cy="3" r="1.5" fill="#e00"/><circle cx="24" cy="8" r="1.8" fill="#e00"/><circle cx="3" cy="13" r="1.9" fill="#e00"/><circle cx="16" cy="23" r="2.1" fill="#e00"/></svg>
<svg class="a" style="left:43px;top:357px" width="26" height="26" viewBox="0 0 26 26"><path d="M4 13l8-9 9 5-6 11z" fill="#888" stroke="#111" stroke-width="1.4"/><circle cx="4" cy="13" r="1.9" fill="#e00000"/><circle cx="12" cy="4" r="1.9" fill="#e00000"/><circle cx="21" cy="9" r="1.9" fill="#e00000"/><circle cx="15" cy="20" r="1.9" fill="#e00000"/></svg>
<svg class="a" style="left:43px;top:394px" width="26" height="26" viewBox="0 0 26 26"><path d="M4 12l16-6-6 8 8 0-15 6z" fill="#888" stroke="#111" stroke-width="1.2"/><circle cx="4" cy="12" r="1.7" fill="#e00000"/><circle cx="20" cy="6" r="1.7" fill="#e00000"/><circle cx="22" cy="14" r="1.7" fill="#e00000"/><circle cx="14" cy="21" r="1.7" fill="#e00000"/><circle cx="10" cy="7" r="1.7" fill="#e00000"/></svg>
<svg class="a" style="left:43px;top:430px" width="26" height="26" viewBox="0 0 26 26"><path d="M3 12l9-6 9 4-7 9z" fill="#888" stroke="#111" stroke-width="1.3"/><path d="M3 12l0 3 11 6 7-8v-3" fill="none" stroke="#111" stroke-width="1.3"/><circle cx="3" cy="14" r="1.7" fill="#e00000"/><circle cx="12" cy="7" r="1.7" fill="#e00000"/><circle cx="21" cy="12" r="1.7" fill="#e00000"/><circle cx="14" cy="21" r="1.7" fill="#e00000"/></svg>
<svg class="a" style="left:43px;top:468px" width="26" height="26" viewBox="0 0 26 26"><path d="M4 13l5-9 11 7-5 10z" fill="#777" stroke="#111" stroke-width="1.3"/><path d="M9 4l6 17" stroke="#333"/><circle cx="4" cy="13" r="1.8" fill="#e00000"/><circle cx="10" cy="4" r="1.8" fill="#e00000"/><circle cx="20" cy="11" r="1.8" fill="#e00000"/><circle cx="15" cy="21" r="1.8" fill="#e00000"/></svg>
<svg class="a" style="left:43px;top:506px" width="26" height="26" viewBox="0 0 26 26"><path d="M12 2a7 7 0 0 1 5 12q-2 2-2 5h-6q0-3-2-5a7 7 0 0 1 5-12z" fill="#f4f4f4" stroke="#aaa"/><rect x="9" y="18" width="6" height="5" fill="#777"/></svg>
<svg class="a" style="left:43px;top:542px" width="26" height="26" viewBox="0 0 26 26"><rect x="2" y="2" width="21" height="21" rx="4" fill="#ddd" stroke="#888"/><circle cx="12.5" cy="12.5" r="8" fill="#222"/><circle cx="12.5" cy="12.5" r="5" fill="#555"/><circle cx="12.5" cy="12.5" r="1.8" fill="#fff"/></svg>
<svg class="a" style="left:43px;top:580px" width="26" height="26" viewBox="0 0 26 26"><path d="M2 9h6l2-4h6l2 4h4v12H2z" fill="#444"/><circle cx="15" cy="14" r="5.5" fill="#111" stroke="#ccc"/><circle cx="15" cy="14" r="2.5" fill="#666"/><rect x="3" y="11" width="5" height="8" fill="#999"/><path d="M22 21l3 2-3 2z" fill="#000"/></svg>
<svg class="a" style="left:43px;top:619px" width="26" height="26" viewBox="0 0 26 26"><rect x="7" y="3" width="12" height="10" fill="#666" stroke="#333"/><rect x="10" y="5" width="6" height="6" fill="#111"/><path d="M3 16h12l-2 3H2z" fill="#444"/><path d="M6 19l17-1 1 4-19 1z" fill="#777" stroke="#333" stroke-width="0.6"/></svg>
<svg class="a" style="left:43px;top:655px" width="26" height="26" viewBox="0 0 26 26"><path d="M2 2l22 3M2 20l20 5" stroke="#222" stroke-width="1.5"/><path d="M6 4l12 2v14l-12-2z" fill="#eee" stroke="#111" stroke-width="1.6"/><path d="M12 5v14M6 11l12 2" stroke="#111" stroke-width="1.6"/><path d="M22 16l3 2-3 2z" fill="#000"/></svg>
<svg class="a" style="left:43px;top:699px" width="26" height="26" viewBox="0 0 26 26"><path d="M11 3L24 9L3 13L16 23" stroke="#111" stroke-width="1.8" fill="none"/><circle cx="11" cy="3" r="1.6" fill="#fff" stroke="#111"/><circle cx="24" cy="9" r="1.6" fill="#fff" stroke="#111"/><circle cx="16" cy="23" r="2.2" fill="#444"/><circle cx="3" cy="13" r="2.2" fill="#e00"/><path d="M6 2v8M2 6h8" stroke="#fff" stroke-width="1.8"/></svg>
<svg class="a" style="left:43px;top:737px" width="26" height="26" viewBox="0 0 26 26"><path d="M11 3L24 9L3 13L16 23" stroke="#111" stroke-width="1.8" fill="none"/><circle cx="11" cy="3" r="1.6" fill="#fff" stroke="#111"/><circle cx="24" cy="9" r="1.6" fill="#fff" stroke="#111"/><circle cx="16" cy="23" r="2.2" fill="#444"/><circle cx="3" cy="13" r="2.2" fill="#e00"/><path d="M3 3l6 6M9 3L3 9" stroke="#e8e8e8" stroke-width="1.5"/></svg>
<svg class="a" style="left:43px;top:784px" width="26" height="26" viewBox="0 0 26 26"><path d="M12 3l3 4h-6zM12 22l3-4h-6zM3 12l4-3v6zM22 12l-4-3v6z" fill="#333"/><path d="M12 9l3 3-3 3-3-3z" fill="#999"/></svg>
<svg class="a" style="left:43px;top:822px" width="26" height="26" viewBox="0 0 26 26"><path d="M5 10a8 6 0 0 1 14-1M19 15a8 6 0 0 1-14 1" fill="none" stroke="#444" stroke-width="1.6"/><path d="M19 6v5h-5M5 20v-5h5" fill="none" stroke="#333" stroke-width="0"/><path d="M17 6l3 4-5 0z M7 20l-3-4 5 0z" fill="#333"/><circle cx="12" cy="13" r="1.3" fill="#222"/></svg>
<svg class="a" style="left:43px;top:861px" width="26" height="26" viewBox="0 0 26 26"><circle cx="10" cy="10" r="6" fill="#999" stroke="#555" stroke-width="1.4"/><path d="M14 14l7 7" stroke="#111" stroke-width="3"/></svg>
<svg class="a" style="left:43px;top:899px" width="26" height="26" viewBox="0 0 26 26"><path d="M4 4l18 9-18 9" fill="none" stroke="#333" stroke-width="1.2"/><path d="M10 8l12 5-12 6z" fill="#888"/><path d="M5 7v12M3 9l2-2 2 2M3 17l2 2 2-2" stroke="#222" stroke-width="1.1" fill="none"/></svg>
<div class="hl" style="left:40px;top:273px;width:30px;background:#a0a0a0"></div><div class="hl" style="left:40px;top:274px;width:30px;background:#fff"></div>
<div class="hl" style="left:40px;top:690px;width:30px;background:#a0a0a0"></div><div class="hl" style="left:40px;top:691px;width:30px;background:#fff"></div>
<div class="hl" style="left:40px;top:774px;width:30px;background:#a0a0a0"></div><div class="hl" style="left:40px;top:775px;width:30px;background:#fff"></div>
<div class="a" style="left:76px;top:156px;width:1627px;height:861px;border:1px solid #a0a0a0;border-right:2px solid #a0a0a0;border-bottom:2px solid #a0a0a0;background:#fff"></div>
<svg class="a" style="left:0;top:0" width="1920" height="1080" viewBox="0 0 1920 1080">
<defs><clipPath id="pl"><polygon points="304,472 740,307 1579,719 1136,934"/></clipPath><clipPath id="vp"><rect x="77" y="157" width="1625" height="858"/></clipPath></defs>
<g clip-path="url(#vp)"><line x1="512" y1="157" x2="1697" y2="731" stroke="#707070" stroke-width="1"/><line x1="305" y1="514" x2="1185" y2="1015" stroke="#707070" stroke-width="1"/><line x1="302" y1="237" x2="305" y2="514" stroke="#808080" stroke-width="1"/><line x1="305" y1="514" x2="352" y2="498" stroke="#808080" stroke-width="1"/><line x1="79" y1="462" x2="1028" y2="1015" stroke="#606060" stroke-width="1" stroke-dasharray="3 3"/><line x1="1697" y1="813" x2="1300" y2="1015" stroke="#606060" stroke-width="1" stroke-dasharray="3 3"/><line x1="77" y1="382" x2="598" y2="196" stroke="#b8b8b8" stroke-width="1" stroke-dasharray="4 4"/><line x1="80" y1="172" x2="492" y2="399" stroke="#b8b8b8" stroke-width="1" stroke-dasharray="4 4"/><line x1="130" y1="157" x2="77" y2="184" stroke="#b0b0b0" stroke-width="1" stroke-dasharray="4 3"/><line x1="241" y1="556" x2="380" y2="509" stroke="#b8b8b8" stroke-width="1" stroke-dasharray="4 4"/><line x1="517" y1="716" x2="650" y2="657" stroke="#b0b0b0" stroke-width="1" stroke-dasharray="4 3"/><line x1="1399" y1="628" x2="1441" y2="607" stroke="#c0c0c0" stroke-width="1" stroke-dasharray="4 3"/><line x1="1090" y1="472" x2="1130" y2="457" stroke="#c8c8c8" stroke-width="1" stroke-dasharray="4 4"/><line x1="1320" y1="836" x2="1660" y2="1015" stroke="#c0c0c0" stroke-width="1" stroke-dasharray="4 3"/><line x1="820" y1="892" x2="950" y2="835" stroke="#c0c0c0" stroke-width="1" stroke-dasharray="4 3"/><line x1="1305" y1="1010" x2="1340" y2="993" stroke="#c0c0c0" stroke-width="1" stroke-dasharray="4 3"/><line x1="302" y1="237" x2="288" y2="325" stroke="#808080" stroke-width="1"/><line x1="302" y1="237" x2="318" y2="314" stroke="#808080" stroke-width="1"/><line x1="559" y1="190" x2="559" y2="374" stroke="#e00000" stroke-width="1"/><line x1="559" y1="190" x2="545" y2="277" stroke="#e00000" stroke-width="1"/><line x1="559" y1="190" x2="573" y2="267" stroke="#e00000" stroke-width="1"/><line x1="559" y1="374" x2="559" y2="437" stroke="#c8e890" stroke-width="1"/><line x1="267" y1="403" x2="305" y2="406" stroke="#808080" stroke-width="1"/><line x1="267" y1="426" x2="305" y2="429" stroke="#808080" stroke-width="1"/><line x1="267" y1="448" x2="305" y2="451" stroke="#808080" stroke-width="1"/><line x1="267" y1="471" x2="305" y2="474" stroke="#808080" stroke-width="1"/><line x1="267" y1="493" x2="305" y2="496" stroke="#808080" stroke-width="1"/><line x1="616" y1="717" x2="644" y2="706" stroke="#707070" stroke-width="1"/><line x1="918" y1="890" x2="946" y2="878" stroke="#707070" stroke-width="1"/><line x1="863" y1="299" x2="790" y2="316" stroke="#808080" stroke-width="1"/><line x1="863" y1="299" x2="786" y2="328" stroke="#808080" stroke-width="1"/><line x1="863" y1="299" x2="814" y2="327" stroke="#808080" stroke-width="1"/><line x1="811" y1="337" x2="850" y2="322" stroke="#c8c8c8" stroke-width="1" stroke-dasharray="4 4"/></g>
<g clip-path="url(#pl)"><polygon points="304,472 740,307 1579,719 1136,934" fill="#9e0056"/><polygon points="340,560 359,500 404,512 466,533 507,551 545,578 533,562 535,555 543,548 558,538 580,532 590,521 640,520 720,535 780,560 900,625 1000,685 1078,725 1146,752 1250,735 1300,700 1312,690 1315,696 1310,688 1299,667 1294,645 1275,629 1238,605 1214,587 1205,568 1207,560 1217,541 1240,520 1650,700 1650,1000 300,1000" fill="#d20028"/><polygon points="677,325 662,341 653,352 659,362 687,375 715,379 743,371 767,352 775,341 790,339 822,340 800,300 700,300" fill="#d20028"/><polygon points="500,650 521,592 538,593 563,600 580,607 616,618 651,628 657,638 654,624 675,613 702,606 725,593 746,582 767,575 785,578 805,588 850,610 1000,690 1150,750 1250,735 1305,700 1310,697 1323,696 1337,693 1353,683 1369,661 1377,651 1390,640 1377,629 1361,611 1370,590 1650,700 1650,1000 500,1000" fill="#fe1100"/><polygon points="620,700 642,661 672,667 702,676 731,690 761,705 776,708 788,711 776,696 779,684 800,676 823,670 832,652 841,625 850,615 900,625 1000,680 1100,730 1200,740 1254,722 1279,731 1306,742 1328,756 1346,769 1361,780 1368,784 1370,800 1394,791 1439,776 1480,762 1579,719 1600,730 1600,1000 620,1000" fill="#fe4400"/><polygon points="770,760 782,735 805,741 835,752 865,773 894,794 924,812 950,821 998,833 1033,854 1078,878 1084,878 1057,851 1033,827 1013,804 1004,774 1007,756 998,724 1001,700 1078,724 1137,762 1152,774 1167,798 1184,821 1196,839 1199,857 1196,881 1240,872 1330,835 1340,900 1100,1000 760,1000" fill="#fe7700"/><polygon points="518,476 560,461 620,438 680,418 722,403 760,406 800,424 850,447 900,472 950,500 936,489 929,471 933,453 957,433 978,420 1117,485 1120,513 1138,548 1161,584 1200,613 1236,628 1274,637 1295,652 1298,672 1310,684 1318,700 1306,712 1200,766 1150,768 726,550 587,522 555,516 542,503 530,487" fill="#6a0098"/><polygon points="530,482 565,469 620,447 680,425 722,412 760,414 850,455 950,505 1050,550 1150,598 1250,645 1290,666 1308,690 1300,704 1200,760 1152,762 727,545 588,518 556,510 546,498" fill="#3500cb"/><polygon points="781,548 838,521 909,505 1000,550 1060,579 1117,607 1191,643 1247,668 1275,672 1285,682 1279,693 1211,699 1190,705 1181,718 1155,733 1125,730 1078,715 1033,694 989,664 953,647 918,632 900,626 870,612 842,595 801,567 781,555" fill="#0000fe"/><polygon points="990,622 1008,614 1160,690 1155,712 1128,706" fill="#6a0098"/><polygon points="996,622 1010,617 1152,690 1148,708 1128,703" fill="#d20028"/><polygon points="1010,622 1020,621 1140,684 1138,698" fill="#fe1100"/><polygon points="1213,699 1224,692 1236,699 1224,706" fill="#fe1100"/><polygon points="738,443 749,438 760,443 749,448" fill="#6a0098"/><polygon points="743,443 749,440 755,443 749,446" fill="#9e0056"/><polygon points="665,472 676,467 687,472 676,477" fill="#6a0098"/><polygon points="670,472 676,469 682,472 676,475" fill="#9e0056"/><polygon points="708,470 719,465 730,470 719,475" fill="#6a0098"/><polygon points="713,470 719,467 725,470 719,473" fill="#9e0056"/><polygon points="621,482 632,477 643,482 632,487" fill="#6a0098"/><polygon points="626,482 632,479 638,482 632,485" fill="#9e0056"/><polygon points="606,510 617,505 628,510 617,515" fill="#6a0098"/><polygon points="611,510 617,507 623,510 617,513" fill="#9e0056"/><polygon points="667,517 678,512 689,517 678,522" fill="#6a0098"/><polygon points="672,517 678,514 684,517 678,520" fill="#9e0056"/><polygon points="1239,713 1250,708 1261,713 1250,718" fill="#6a0098"/><polygon points="1244,713 1250,710 1256,713 1250,716" fill="#9e0056"/></g>
<g><polygon points="353,476 747,325 1557,725 1154,921" fill="none" stroke="#30e0a8" stroke-width="1"/><path d="M566,473 L719,412 Q735,405 750,411 L1290,678 Q1313,690 1304,708 L1200,760 Q1175,770 1150,762 L726,545 L587,517 Q555,512 548,495 Q548,480 566,473 Z" fill="none" stroke="#30e0a8" stroke-width="1"/><path d="M570,477 L720,417 Q734,411 748,416 L1286,681 Q1305,692 1297,704 L1198,755 Q1175,764 1152,757 L727,541 L590,514 Q560,509 554,495 Q554,483 570,477 Z" fill="none" stroke="#30e0a8" stroke-width="1"/><path d="M579,483 L722,426 Q734,421 746,425 L1278,686 Q1292,694 1286,702 L1193,746 Q1173,755 1154,749 L728,534 L596,507 Q574,503 568,494 Q567,488 579,483 Z" fill="none" stroke="#30e0a8" stroke-width="1"/><path d="M739,421 L874,466" fill="none" stroke="#30e0a8" stroke-width="3"/><path d="M774,415 L1300,672" fill="none" stroke="#30e0a8" stroke-width="1"/><path d="M780,413 L1304,668" fill="none" stroke="#30e0a8" stroke-width="1"/><path d="M636,491 L744,448 L796,473 L714,507 Z" fill="none" stroke="#30e0a8" stroke-width="1"/><path d="M739,426 L796,473" fill="none" stroke="#30e0a8" stroke-width="1"/><path d="M600,500 L720,460" fill="none" stroke="#30e0a8" stroke-width="1"/><path d="M785,506 L816,493 L951,563 L920,575 Z M785,506 V551 M816,493 V538 M951,563 V608 M920,575 V620 M785,551 L920,620 L951,608" fill="none" stroke="#30e0a8" stroke-width="1"/><path d="M851,480 L909,456 L1000,500 M851,480 V530 M909,456 Q905,520 895,563 M851,530 L909,505 L1040,570" fill="none" stroke="#30e0a8" stroke-width="1"/><path d="M981,607 L1013,595 L1156,668 L1123,682 Z M981,607 V658 M1013,595 V648 M1156,668 V722 M1123,682 V733 M981,658 L1123,733 L1156,722" fill="none" stroke="#30e0a8" stroke-width="1"/><path d="M1192,652 L1249,625 M1192,652 L1187,703 M1249,625 L1247,674 M1187,703 L1247,674 M1249,625 L1050,528" fill="none" stroke="#30e0a8" stroke-width="1"/><path d="M1045,617 L1160,676" fill="none" stroke="#30e0a8" stroke-width="1"/><polygon points="818,542 841,533 890,565 873,579" fill="#c8103a"/><line x1="818.0" y1="542.0" x2="841.0" y2="533.0" stroke="#30e0a8" stroke-width="0.9"/><line x1="823.0" y1="545.4" x2="845.5" y2="535.9" stroke="#30e0a8" stroke-width="0.9"/><line x1="828.0" y1="548.7" x2="849.9" y2="538.8" stroke="#30e0a8" stroke-width="0.9"/><line x1="833.0" y1="552.1" x2="854.4" y2="541.7" stroke="#30e0a8" stroke-width="0.9"/><line x1="838.0" y1="555.5" x2="858.8" y2="544.6" stroke="#30e0a8" stroke-width="0.9"/><line x1="843.0" y1="558.8" x2="863.3" y2="547.5" stroke="#30e0a8" stroke-width="0.9"/><line x1="848.0" y1="562.2" x2="867.7" y2="550.5" stroke="#30e0a8" stroke-width="0.9"/><line x1="853.0" y1="565.5" x2="872.2" y2="553.4" stroke="#30e0a8" stroke-width="0.9"/><line x1="858.0" y1="568.9" x2="876.6" y2="556.3" stroke="#30e0a8" stroke-width="0.9"/><line x1="863.0" y1="572.3" x2="881.1" y2="559.2" stroke="#30e0a8" stroke-width="0.9"/><line x1="868.0" y1="575.6" x2="885.5" y2="562.1" stroke="#30e0a8" stroke-width="0.9"/><line x1="873.0" y1="579.0" x2="890.0" y2="565.0" stroke="#30e0a8" stroke-width="0.9"/><path d="M818,542 L841,533 L890,565 L873,579 Z" fill="none" stroke="#30e0a8" stroke-width="1.5"/><path d="M816,545 L830,570 L838,578" fill="none" stroke="#30e0a8" stroke-width="3"/><polygon points="1153,712 1188,706 1194,722 1160,730" fill="#6a0098"/><line x1="1153.0" y1="712.0" x2="1188.0" y2="706.0" stroke="#30e0a8" stroke-width="0.9"/><line x1="1154.0" y1="714.6" x2="1188.9" y2="708.3" stroke="#30e0a8" stroke-width="0.9"/><line x1="1155.0" y1="717.1" x2="1189.7" y2="710.6" stroke="#30e0a8" stroke-width="0.9"/><line x1="1156.0" y1="719.7" x2="1190.6" y2="712.9" stroke="#30e0a8" stroke-width="0.9"/><line x1="1157.0" y1="722.3" x2="1191.4" y2="715.1" stroke="#30e0a8" stroke-width="0.9"/><line x1="1158.0" y1="724.9" x2="1192.3" y2="717.4" stroke="#30e0a8" stroke-width="0.9"/><line x1="1159.0" y1="727.4" x2="1193.1" y2="719.7" stroke="#30e0a8" stroke-width="0.9"/><line x1="1160.0" y1="730.0" x2="1194.0" y2="722.0" stroke="#30e0a8" stroke-width="0.9"/><path d="M1153,712 L1188,706 L1194,722 L1160,730 Z" fill="none" stroke="#30e0a8" stroke-width="1.2"/><path d="M1050,655 L1145,703 L1148,697 L1053,650 Z" fill="none" stroke="#30e0a8" stroke-width="1.5"/><path d="M1205,652 L1225,662 M1232,664 L1250,672" fill="none" stroke="#30e0a8" stroke-width="3"/><path d="M840,585 L860,595" fill="none" stroke="#30e0a8" stroke-width="4"/><path d="M559,437 L739,532" fill="none" stroke="#c8f0a0" stroke-width="1"/><path d="M559,437 L754,360 M754,360 L681,378 M754,360 L702,390" fill="none" stroke="#c8f0a0" stroke-width="1"/><path d="M665,506 L739,532 M692,494 L738,530" fill="none" stroke="#c8f0a0" stroke-width="1"/><path d="M559,374 L559,437" fill="none" stroke="#c8f0a0" stroke-width="1"/></g>
</svg>
<div class="t" style="left:84px;top:166px;font-size:26px;font-weight:bold">CFD Analysis</div>
<div class="t" style="left:84px;top:196px;font-size:16px;font-weight:bold">Cell Pressure</div>
<div class="t" style="left:84px;top:216px;font-size:13px">Contour Range: -3.0 - 37.0 Pa</div>
<div class="t" style="left:84px;top:232px;font-size:13px">In Steps of: 4.0 Pa</div>
<div class="t" style="left:84px;top:248px;font-size:10px">?ECOTECT v5</div>
<div class="t" style="left:296px;top:174px;font-size:8px;color:#888">Pa</div>
<div class="t" style="left:216px;top:399px;font-size:8px;color:#777">35052</div>
<div class="t" style="left:216px;top:422px;font-size:8px;color:#777">27751</div>
<div class="t" style="left:216px;top:444px;font-size:8px;color:#777">20451</div>
<div class="t" style="left:216px;top:467px;font-size:8px;color:#777">13150</div>
<div class="t" style="left:219px;top:489px;font-size:8px;color:#777">5849</div>
<div class="t" style="left:574px;top:726px;font-size:8px;color:#777">147353</div>
<div class="t" style="left:876px;top:900px;font-size:8px;color:#777">265753</div>
<div class="t" style="left:903px;top:278px;font-size:8px;color:#777">Y</div>
<div class="t" style="left:1667px;top:163px;font-size:13px">Pa</div>
<div class="a" style="left:1661px;top:180px;width:31px;height:21px;background:#ffff00;color:#000;font-size:13px;line-height:25px;text-align:center;white-space:nowrap;letter-spacing:-0.3px">37.0+</div>
<div class="a" style="left:1661px;top:202px;width:31px;height:22px;background:#ffdd00;color:#000;font-size:13px;line-height:26px;text-align:center;white-space:nowrap;letter-spacing:-0.3px">33.0</div>
<div class="a" style="left:1661px;top:225px;width:31px;height:22px;background:#ffa500;color:#000;font-size:13px;line-height:26px;text-align:center;white-space:nowrap;letter-spacing:-0.3px">29.0</div>
<div class="a" style="left:1661px;top:248px;width:31px;height:21px;background:#ff7700;color:#000;font-size:13px;line-height:25px;text-align:center;white-space:nowrap;letter-spacing:-0.3px">25.0</div>
<div class="a" style="left:1661px;top:270px;width:31px;height:21px;background:#ff4400;color:#000;font-size:13px;line-height:25px;text-align:center;white-space:nowrap;letter-spacing:-0.3px">21.0</div>
<div class="a" style="left:1661px;top:292px;width:31px;height:22px;background:#ff1000;color:#fff;font-size:13px;line-height:26px;text-align:center;white-space:nowrap;letter-spacing:-0.3px">17.0</div>
<div class="a" style="left:1661px;top:315px;width:31px;height:22px;background:#d40026;color:#fff;font-size:13px;line-height:26px;text-align:center;white-space:nowrap;letter-spacing:-0.3px">13.0</div>
<div class="a" style="left:1661px;top:338px;width:31px;height:21px;background:#a0005a;color:#fff;font-size:13px;line-height:25px;text-align:center;white-space:nowrap;letter-spacing:-0.3px">9.0</div>
<div class="a" style="left:1661px;top:360px;width:31px;height:21px;background:#6a0099;color:#fff;font-size:13px;line-height:25px;text-align:center;white-space:nowrap;letter-spacing:-0.3px">5.0</div>
<div class="a" style="left:1661px;top:382px;width:31px;height:22px;background:#3300cc;color:#fff;font-size:13px;line-height:26px;text-align:center;white-space:nowrap;letter-spacing:-0.3px">1.0</div>
<div class="a" style="left:1661px;top:405px;width:31px;height:22px;background:#0000ff;color:#fff;font-size:13px;line-height:26px;text-align:center;white-space:nowrap;letter-spacing:-0.3px">-3.0</div>
<div class="vl" style="left:1702px;top:117px;height:902px;background:#a0a0a0"></div><div class="vl" style="left:1703px;top:117px;height:902px;background:#fff"></div>
<div class="hl" style="left:1704px;top:117px;width:216px;background:#fff"></div>
<div class="vl" style="left:1916px;top:117px;height:836px;background:#a0a0a0"></div>
<div class="a" style="left:1706px;top:117px;width:31px;height:31px;border-top:1px solid #fff;border-left:1px solid #fff;border-bottom:2px solid #a0a0a0"></div>
<svg class="a" style="left:1710px;top:120px" width="24" height="24" viewBox="0 0 24 24"><path d="M8 3l12 11-6 1 4 8-3 1-4-8-4 5z" fill="#777" stroke="#444"/></svg>
<div class="a" style="left:1706px;top:150px;width:31px;height:28px;border-top:1px solid #fff;border-left:1px solid #fff;border-bottom:2px solid #a0a0a0"></div>
<svg class="a" style="left:1710px;top:152px" width="24" height="24" viewBox="0 0 24 24"><line x1="1" y1="6.0" x2="8" y2="6.0" stroke="#777" stroke-width="0.6"/><line x1="1" y1="7.5" x2="8" y2="7.5" stroke="#777" stroke-width="0.6"/><line x1="1" y1="9.0" x2="8" y2="9.0" stroke="#777" stroke-width="0.6"/><line x1="1" y1="10.5" x2="8" y2="10.5" stroke="#777" stroke-width="0.6"/><line x1="1" y1="12.0" x2="8" y2="12.0" stroke="#777" stroke-width="0.6"/><line x1="1" y1="13.5" x2="8" y2="13.5" stroke="#777" stroke-width="0.6"/><line x1="1" y1="15.0" x2="8" y2="15.0" stroke="#777" stroke-width="0.6"/><path d="M7 8l9-4 8 5-4 9-9-3z" fill="#888" stroke="#222"/><path d="M10 10l10 3" stroke="#ccc"/><circle cx="8" cy="7" r="1.5" fill="#e00000"/><circle cx="22" cy="12" r="1.5" fill="#e00000"/><circle cx="19" cy="20" r="1.5" fill="#e00000"/></svg>
<div class="a" style="left:1706px;top:180px;width:31px;height:28px;border-top:1px solid #fff;border-left:1px solid #fff;border-bottom:2px solid #a0a0a0"></div>
<svg class="a" style="left:1710px;top:182px" width="24" height="24" viewBox="0 0 24 24"><g transform="translate(13,12) rotate(35) scale(1,0.8)"><rect x="-7.5" y="-7.5" width="5" height="5" fill="#111"/><rect x="-2.5" y="-7.5" width="5" height="5" fill="#f0f0f0"/><rect x="2.5" y="-7.5" width="5" height="5" fill="#111"/><rect x="-7.5" y="-2.5" width="5" height="5" fill="#f0f0f0"/><rect x="-2.5" y="-2.5" width="5" height="5" fill="#111"/><rect x="2.5" y="-2.5" width="5" height="5" fill="#f0f0f0"/><rect x="-7.5" y="2.5" width="5" height="5" fill="#111"/><rect x="-2.5" y="2.5" width="5" height="5" fill="#f0f0f0"/><rect x="2.5" y="2.5" width="5" height="5" fill="#111"/><rect x="-7.5" y="-7.5" width="15" height="15" fill="none" stroke="#111" stroke-width="1"/></g><path d="M4 15l9 8 10-9" stroke="#333" stroke-width="1.5" fill="none"/></svg>
<div class="a" style="left:1706px;top:210px;width:31px;height:30px;border-top:1px solid #fff;border-left:1px solid #fff;border-bottom:2px solid #a0a0a0"></div>
<svg class="a" style="left:1710px;top:213px" width="24" height="24" viewBox="0 0 24 24"><line x1="1" y1="9.0" x2="9" y2="9.0" stroke="#777" stroke-width="0.6"/><line x1="1" y1="10.5" x2="9" y2="10.5" stroke="#777" stroke-width="0.6"/><line x1="1" y1="12.0" x2="9" y2="12.0" stroke="#777" stroke-width="0.6"/><line x1="1" y1="13.5" x2="9" y2="13.5" stroke="#777" stroke-width="0.6"/><line x1="1" y1="15.0" x2="9" y2="15.0" stroke="#777" stroke-width="0.6"/><line x1="1" y1="16.5" x2="9" y2="16.5" stroke="#777" stroke-width="0.6"/><line x1="1" y1="18.0" x2="9" y2="18.0" stroke="#777" stroke-width="0.6"/><path d="M6 10l9-6 9 7-9 8z" fill="#e00" stroke="#222"/><path d="M10 7l9 7M15 4l-3 13M19 8l-9 6" stroke="#400"/><path d="M6 10l9 9 0 3-9-9z" fill="#333"/></svg>
<div class="a" style="left:1706px;top:241px;width:31px;height:29px;border-top:1px solid #fff;border-left:1px solid #fff;border-bottom:2px solid #a0a0a0"></div>
<svg class="a" style="left:1710px;top:243px" width="24" height="24" viewBox="0 0 24 24"><path d="M2 8h6M2 10h5M2 12h6" stroke="#bbb" stroke-width="0.7"/><path d="M5 13q9-9 18 0q-9 7-18 0z" fill="#ddd" stroke="#555" stroke-width="1.2"/><circle cx="15" cy="12.5" r="3.5" fill="#555"/><circle cx="15" cy="12.5" r="1.5" fill="#111"/><path d="M8 9q7-5 14 1" stroke="#666" stroke-width="1.4" fill="none"/></svg>
<div class="a" style="left:1706px;top:271px;width:31px;height:29px;border-top:1px solid #fff;border-left:1px solid #fff;border-bottom:2px solid #a0a0a0"></div>
<svg class="a" style="left:1710px;top:273px" width="24" height="24" viewBox="0 0 24 24"><path d="M13 2l2 6 5-3-2 6 6 1-6 3 4 5-6-2-1 6-3-5-4 4 1-6-6-1 5-3-4-5 6 1z" fill="#c8b820" stroke="#777" stroke-width="0.6"/><circle cx="13" cy="13" r="4.5" fill="#ffff40"/><circle cx="12" cy="12" r="2" fill="#fff"/></svg>
<div class="a" style="left:1706px;top:301px;width:31px;height:29px;border-top:1px solid #fff;border-left:1px solid #fff;border-bottom:2px solid #a0a0a0"></div>
<svg class="a" style="left:1710px;top:303px" width="24" height="24" viewBox="0 0 24 24"><path d="M3 13l10-9 11 7-10 10z" fill="#1f4fe0" stroke="#111"/><path d="M6.5 10l11 7M10 7l10.5 6.5M7 16.5l9.5-9.5M10.5 19l10-9.5" stroke="#9bf" stroke-width="0.9"/><path d="M3 13l11 8v2L3 15z" fill="#112"/><path d="M14 21l10-10v2L14 23z" fill="#223"/></svg>
<div class="a" style="left:1706px;top:331px;width:31px;height:29px;border-top:1px solid #fff;border-left:1px solid #fff;border-bottom:2px solid #a0a0a0"></div>
<svg class="a" style="left:1710px;top:333px" width="24" height="24" viewBox="0 0 24 24"><rect x="15" y="3" width="4" height="4" fill="#e00"/><rect x="9" y="7" width="3" height="3" fill="#e00"/><rect x="3" y="12" width="4" height="4" fill="#e00"/><rect x="13" y="12" width="3" height="3" fill="#e00"/><rect x="19" y="10" width="4" height="4" fill="#e00"/><rect x="8" y="17" width="4" height="4" fill="#e00"/><rect x="16" y="18" width="4" height="4" fill="#e00"/><path d="M11 9l3 4 6-2M5 14l8-1" stroke="#faa" stroke-width="0.8"/></svg>
<div class="a" style="left:1706px;top:361px;width:31px;height:29px;border-top:1px solid #fff;border-left:1px solid #fff;border-bottom:2px solid #a0a0a0"></div>
<svg class="a" style="left:1710px;top:363px" width="24" height="24" viewBox="0 0 24 24"><path d="M2 7h6M2 10h5M2 13h6M2 16h5" stroke="#999" stroke-width="0.7"/><path d="M8 6h13l-2 17h-9z" fill="#777" stroke="#222"/><path d="M11 8v13M14.5 8v13M18 8v13" stroke="#ddd" stroke-width="1.2"/><ellipse cx="14.5" cy="6" rx="7" ry="2" fill="#aaa" stroke="#333"/></svg>
<div class="a" style="left:1706px;top:391px;width:31px;height:29px;border-top:1px solid #fff;border-left:1px solid #fff;border-bottom:2px solid #a0a0a0"></div>
<svg class="a" style="left:1710px;top:393px" width="24" height="24" viewBox="0 0 24 24"><path d="M7 3v14M0 10h14M7 3l-2 2h4zM7 17l-2-2h4zM0 10l2-2v4zM14 10l-2-2v4z" stroke="#222" stroke-width="1.2" fill="#222"/><path d="M14 7q2-5 7-3t1 7" fill="none" stroke="#222" stroke-width="1.6"/><path d="M20 11h4l-2-3z" fill="#222"/><rect x="14" y="14" width="9" height="9" fill="#666" stroke="#222"/><rect x="9" y="18" width="8" height="6" fill="#fff" stroke="#e00" stroke-width="1.3"/></svg>
<div class="a" style="left:1706px;top:421px;width:31px;height:29px;border-top:1px solid #fff;border-left:1px solid #fff;border-bottom:2px solid #a0a0a0"></div>
<svg class="a" style="left:1710px;top:423px" width="24" height="24" viewBox="0 0 24 24"><path d="M4 2h10l4 4v10H4z" fill="#f4f4f4" stroke="#666"/><path d="M14 2v4h4" fill="none" stroke="#888"/><path d="M7 11q4 9 12 7" fill="none" stroke="#e00" stroke-width="3.5"/><path d="M17 13l7 5-7 5z" fill="#e00"/></svg>
<div class="vl" style="left:1740px;top:148px;height:805px;background:#a0a0a0"></div>
<div class="a" style="left:1741px;top:120px;width:172px;height:26px;overflow:hidden"><div class="t" style="left:-6px;top:4px;font-size:18px;font-weight:bold;color:#5c6070">Selection Information</div></div>
<div class="inp" style="left:1742px;top:150px;width:82px;height:22px"></div><div class="t" style="left:1745px;top:154px;font-size:13px">Zones</div>
<div class="a" style="left:1803px;top:152px;width:20px;height:18px;background:#f0f0f0;border:1px solid #a0a0a0"></div><svg class="a" style="left:1808px;top:158px" width="10" height="6"><path d="M0 0H10L5 6Z" fill="#000"/></svg>
<svg class="a" style="left:1832px;top:155px" width="14" height="14"><path d="M7 1l6 6h-3v6H4V7H1z" fill="#fff" stroke="#000"/></svg>
<svg class="a" style="left:1858px;top:155px" width="14" height="14"><path d="M7 13l6-6h-3V1H4v6H1z" fill="#fff" stroke="#000"/></svg>
<svg class="a" style="left:1887px;top:158px" width="6" height="9"><path d="M0 0l5 4.5L0 9z" fill="#000"/></svg>
<div class="a" style="left:1741px;top:176px;width:173px;height:700px;background:#a0a0a0;border-left:1px solid #696969;border-top:1px solid #696969"></div>
<div class="a" style="left:1743px;top:178px;width:169px;height:19px;background:#000;color:#fff;font-weight:bold;font-size:14px;line-height:19px;padding-left:17px;white-space:nowrap">BASIC DATA</div>
<svg class="a" style="left:1748px;top:182px" width="10" height="12"><path d="M1 1l4 4 4-4M1 5l4 4 4-4" stroke="#fff" stroke-width="1.6" fill="none"/></svg>
<div class="sec" style="top:197px;height:26px;border-top:1px solid #606060">ZONE No.&nbsp;&nbsp;&nbsp; 1</div>
<div class="row" style="top:223px"><div class="lab">Name:</div><div class="val" style=""><svg style="display:inline-block;vertical-align:-1.6px" width="13" height="13" viewBox="0 0 16 16"><path d="M2 3h13M4 3q0 9-3 12" fill="none" stroke="#000" stroke-width="1.35" stroke-linecap="square"/></svg><svg style="display:inline-block;vertical-align:-1.6px" width="13" height="13" viewBox="0 0 16 16"><path d="M8 1l1 1M2 3h12v3H3M3 3q0 9-2 12M5 8h9M9 8v1M6 10h6q0 5-2 5M8 10q0 4-3 5" fill="none" stroke="#000" stroke-width="1.35" stroke-linecap="square"/></svg>1<svg style="display:inline-block;vertical-align:-1.6px" width="13" height="13" viewBox="0 0 16 16"><path d="M2 1l-1 3M2 2h5M9 1l-1 3M9 2h5M2 5v10M2 5l1 1M5 5h9v10l-1-1M6 8h5v5H6zM6 10.5h5" fill="none" stroke="#000" stroke-width="1.35" stroke-linecap="square"/></svg><svg style="display:inline-block;vertical-align:-1.6px" width="13" height="13" viewBox="0 0 16 16"><path d="M4 1L1 7M3 5v10M8 1v12q0 2 7 1v-3M14 4l-6 4" fill="none" stroke="#000" stroke-width="1.35" stroke-linecap="square"/></svg>.dxf</div></div>
<div class="row" style="top:249px"><div class="lab">Colour:</div><div class="val" style="background:#33dda2">A5DF2B</div></div>
<div class="row" style="top:275px"><div class="lab">Frozen:</div><div class="val" style="">False</div></div>
<div class="row" style="top:301px"><div class="lab">Hidden:</div><div class="val" style="">False</div></div>
<div class="row" style="top:327px"><div class="lab">Locked:</div><div class="val" style="">False</div></div>
<div class="row" style="top:353px"><div class="lab">Thermal:</div><div class="val" style="">False</div></div>
<div class="row" style="top:379px"><div class="lab">Status:</div><div class="val" style="color:#a0a0a0">No Volume</div></div>
<div class="sec" style="top:405px">SHADOW COLOURS</div>
<div class="row" style="top:431px"><div class="lab">Highlight:</div><div class="val" style="">False</div></div>
<div class="row" style="top:457px"><div class="lab">Shadows:</div><div class="val" style="background:#444;color:#fff;border-top-color:#444">444444</div></div>
<div class="row" style="top:483px"><div class="lab">Reflections:</div><div class="val" style="">FFFFFF</div></div>
<div class="row" style="top:509px"><div class="lab">No Shadows:</div><div class="val" style="">False</div></div>
<div class="row" style="top:535px"><div class="lab">No Outline:</div><div class="val" style="">False</div></div>
<div class="sec" style="top:561px">COMFORT CONDITIONS</div>
<div class="row" style="top:587px"><div class="lab">Lighting:</div><div class="val" style="">300 lux</div></div>
<div class="hl" style="left:1743px;top:613px;width:85px;background:#000"></div>
<div class="hl" style="left:1743px;top:875px;width:169px;background:#000"></div>
<div class="a" style="left:1743px;top:878px;width:169px;height:19px;background:#000;color:#fff;font-weight:bold;font-size:14px;line-height:19px;padding-left:18px;white-space:nowrap">CUSTOM DATA</div>
<svg class="a" style="left:1747px;top:882px" width="10" height="10"><path d="M1 1l4 4-4 4M5 1l4 4-4 4" stroke="#fff" stroke-width="1.4" fill="none"/></svg>
<div class="hl" style="left:1741px;top:898px;width:173px;background:#fff"></div>
<div class="a" style="left:1743px;top:904px;width:13px;height:13px;background:#fff;border:1px solid #888"></div><svg class="a" style="left:1745px;top:906px" width="10" height="10"><path d="M1 5l3 3 5-7" stroke="#000" stroke-width="1.8" fill="none"/></svg>
<div class="t" style="left:1762px;top:904px;font-size:13px">Automatically Apply Chan</div>
<div class="a" style="left:1741px;top:922px;width:163px;height:24px;background:#f0f0f0;border:1px solid #fff;border-right:2px solid #a0a0a0;border-bottom:2px solid #a0a0a0;font-weight:bold;font-size:14px;text-align:center;line-height:21px"><u>A</u>pply Changes</div>
<div class="hl" style="left:1737px;top:952px;width:180px;background:#a0a0a0"></div><div class="vl" style="left:1737px;top:450px;height:503px;background:#a0a0a0"></div>
<svg class="a" style="left:1740px;top:957px" width="26" height="26" viewBox="0 0 26 26"><path d="M4 4l16-1 1 17-17 1z" fill="#ddd" stroke="#333" stroke-width="1.3"/><path d="M10 3v18M15 3v18M4 9h17M4 14h17" stroke="#333" stroke-width="1"/><circle cx="12" cy="12" r="5" fill="#ccc" stroke="#333" stroke-width="1.3"/><path d="M8 16l-5 5" stroke="#111" stroke-width="2.5"/></svg>
<svg class="a" style="left:1771px;top:957px" width="26" height="26" viewBox="0 0 26 26"><path d="M3 12l9-9 11 6-9 12z" fill="#e00" stroke="#222"/><path d="M7 8l10 6M12 4l-4 12M17 6l-8 9" stroke="#400"/><circle cx="11" cy="13" r="5" fill="#ccc" stroke="#333" stroke-width="1.3"/><path d="M7 17l-5 5" stroke="#111" stroke-width="2.5"/><path d="M12 4h8v6" stroke="#fff" fill="none"/></svg>
<svg class="a" style="left:1801px;top:957px" width="26" height="26" viewBox="0 0 26 26"><path d="M3 10l9-7 11 6-8 12z" fill="#888" stroke="#222"/><circle cx="11" cy="12" r="5" fill="#ccc" stroke="#333" stroke-width="1.3"/><path d="M7 16l-5 5" stroke="#111" stroke-width="2.5"/><circle cx="3" cy="16" r="1.6" fill="#e00000"/><circle cx="21" cy="9" r="1.6" fill="#e00000"/><circle cx="15" cy="21" r="1.6" fill="#e00000"/><circle cx="12" cy="3" r="1.6" fill="#e00000"/></svg>
<svg class="a" style="left:1709px;top:987px" width="26" height="26" viewBox="0 0 26 26"><path d="M3 12l10-9 11 7-9 12z" fill="#e00" stroke="#222"/><path d="M7 8l11 7M13 3l-5 13M18 7l-9 9" stroke="#400"/><circle cx="10" cy="14" r="4.5" fill="#ccc" stroke="#333" stroke-width="1.3"/><path d="M6 18l-4 5" stroke="#111" stroke-width="2.5"/></svg>
<svg class="a" style="left:1740px;top:987px" width="26" height="26" viewBox="0 0 26 26"><path d="M2 11l11-9 11 7-9 13z" fill="#e00" stroke="#222"/><path d="M7 7l11 7M13 3l-5 13M18 7l-9 9" stroke="#400"/><path d="M12 11l8 8-3 1 2 4-2 1-2-4-3 2z" fill="#ddd" stroke="#666" stroke-width="0.6"/></svg>
<svg class="a" style="left:1771px;top:987px" width="26" height="26" viewBox="0 0 26 26"><path d="M1 1h5M1 1v5M25 1h-5M25 1v5M1 25h5M1 25v-5M25 25h-5M25 25v-5" stroke="#e00" stroke-width="2.5"/><path d="M5 9h4l2-3h5l2 3h3v11H5z" fill="#444"/><circle cx="11" cy="14" r="4" fill="#111" stroke="#ccc"/><rect x="16" y="11" width="4" height="7" fill="#999"/></svg>
<div class="hl" style="left:0;top:1019px;width:1912px;background:#a0a0a0"></div>
<div class="a" style="left:0;top:1020px;width:1920px;height:22px;background:#f0f0f0"></div>
<div class="a" style="left:1px;top:1020px;width:94px;height:21px;border-top:1px solid #a0a0a0;border-left:1px solid #a0a0a0"></div>
<div class="a" style="left:98px;top:1020px;width:146px;height:21px;border-top:1px solid #a0a0a0;border-left:1px solid #a0a0a0"></div>
<div class="a" style="left:248px;top:1020px;width:200px;height:21px;border-top:1px solid #a0a0a0;border-left:1px solid #a0a0a0"></div>
<div class="a" style="left:450px;top:1020px;width:1030px;height:21px;border-top:1px solid #a0a0a0;border-left:1px solid #a0a0a0"></div>
<div class="t" style="left:22px;top:1023px;font-size:15px;letter-spacing:0.9px">0/3645</div>
<div class="t" style="left:101px;top:1022px;font-size:15px">Snap<span style="color:#fff"> AC </span>GI<span style="color:#fff"> L </span>MOP</div>
<div class="t" style="left:251px;top:1022px;font-size:15px">Idle</div>
<div class="a" style="left:0;top:1042px;width:1920px;height:38px;background:linear-gradient(90deg,#1a1a2a 0px,#1e1c2a 480px,#2c1c24 620px,#3a2026 720px,#2a2028 820px,#1d2530 920px,#1c1f2e 1050px,#201c2a 1250px,#271c30 1450px,#2c1d3a 1650px,#2a1c38 1920px)"></div>
<div class="a" style="left:190px;top:1078px;width:35px;height:2px;background:#76b9ed"></div>
<div class="a" style="left:236px;top:1078px;width:34px;height:2px;background:#76b9ed"></div>
<div class="a" style="left:328px;top:1078px;width:34px;height:2px;background:#76b9ed"></div>
<div class="a" style="left:466px;top:1078px;width:34px;height:2px;background:#76b9ed"></div>
<div class="a" style="left:742px;top:1078px;width:35px;height:2px;background:#76b9ed"></div>
<div class="a" style="left:788px;top:1078px;width:35px;height:2px;background:#76b9ed"></div>
<div class="a" style="left:834px;top:1078px;width:35px;height:2px;background:#76b9ed"></div>
<div class="a" style="left:880px;top:1078px;width:35px;height:2px;background:#76b9ed"></div>
<div class="a" style="left:926px;top:1078px;width:34px;height:2px;background:#76b9ed"></div>
<div class="a" style="left:1017px;top:1078px;width:35px;height:2px;background:#76b9ed"></div>
<div class="a" style="left:1063px;top:1078px;width:35px;height:2px;background:#76b9ed"></div>
<div class="a" style="left:1105px;top:1078px;width:45px;height:2px;background:#76b9ed"></div>
<div class="a" style="left:1156px;top:1078px;width:35px;height:2px;background:#76b9ed"></div>
<div class="a" style="left:967px;top:1042px;width:45px;height:38px;background:#b5692f"></div><div class="a" style="left:967px;top:1078px;width:45px;height:2px;background:#ff7a1a"></div>
<div class="a" style="left:1105px;top:1042px;width:45px;height:38px;background:#4a4a58"></div>
<svg class="a" style="left:8px;top:1047px" width="28" height="28" viewBox="0 0 28 28"><path d="M3 5l9-1.3v9H3zM13.5 3.5L25 2v11H13.5zM3 14.5h9v9L3 22.3zM13.5 14.5H25V26l-11.5-1.5z" fill="#fff"/></svg>
<svg class="a" style="left:53px;top:1047px" width="28" height="28" viewBox="0 0 28 28"><circle cx="16" cy="11" r="7" fill="none" stroke="#fff" stroke-width="1.6"/><path d="M11 16l-8 9" stroke="#fff" stroke-width="1.8"/></svg>
<svg class="a" style="left:98px;top:1047px" width="28" height="28" viewBox="0 0 28 28"><path d="M4 6h13v16H4z M20 3v22 M24 3v22" fill="none" stroke="#fff" stroke-width="1.5"/><path d="M3 10h15M3 18h15" stroke="#fff" stroke-width="1.5"/></svg>
<svg class="a" style="left:146px;top:1047px" width="28" height="28" viewBox="0 0 28 28"><circle cx="14" cy="14" r="10" fill="#ccc" stroke="#999"/><circle cx="14" cy="14" r="8" fill="#e8e0d8"/><path d="M10 7l7 14" stroke="#d22" stroke-width="2"/></svg>
<svg class="a" style="left:193px;top:1047px" width="28" height="28" viewBox="0 0 28 28"><rect x="5" y="5" width="19" height="14" fill="#cde" stroke="#bbb"/><path d="M7 14l4-4 3 3 4-5 4 4" stroke="#3a8ad8" fill="none" stroke-width="1.4"/><path d="M12 19h5l1 4h-7z" fill="#bbb"/><rect x="2" y="12" width="4" height="9" fill="#888"/></svg>
<svg class="a" style="left:239px;top:1047px" width="28" height="28" viewBox="0 0 28 28"><path d="M3 7h9l2 2h11v15H3z" fill="#f0c040"/><path d="M3 11h22v13H3z" fill="#ffd766"/><path d="M9 16h10v8h-3v-4h-4v4H9z" fill="#2a7ed8"/></svg>
<svg class="a" style="left:285px;top:1047px" width="28" height="28" viewBox="0 0 28 28"><circle cx="14" cy="14" r="11" fill="#1e88d8"/><path d="M4 16q2-10 12-10q8 0 9 8q-1 4-6 4h-5q3 5 10 2q-4 7-11 6q-8-2-9-10z" fill="#47c85a"/><path d="M6 18q3 8 12 6q-6-2-6-8q0-4 5-5q-9-2-11 7z" fill="#0c59a4"/></svg>
<svg class="a" style="left:331px;top:1047px" width="28" height="28" viewBox="0 0 28 28"><circle cx="14" cy="14" r="11" fill="#db4437"/><path d="M14 14L3.5 10A11 11 0 0 0 9 23.5z" fill="#0f9d58"/><path d="M14 14L9 23.5A11 11 0 0 0 25 12z" fill="#ffcd40"/><circle cx="14" cy="14" r="5" fill="#fff"/><circle cx="14" cy="14" r="3.8" fill="#4285f4"/></svg>
<svg class="a" style="left:377px;top:1047px" width="28" height="28" viewBox="0 0 28 28"><ellipse cx="11" cy="11" rx="9" ry="7.5" fill="#2dc100"/><ellipse cx="18" cy="17" rx="8" ry="6.5" fill="#f2f2f2" stroke="#2a2a3a" stroke-width="0.8"/><circle cx="8" cy="9" r="1" fill="#111"/><circle cx="13" cy="9" r="1" fill="#111"/></svg>
<svg class="a" style="left:422px;top:1047px" width="28" height="28" viewBox="0 0 28 28"><ellipse cx="14" cy="15" rx="7" ry="9" fill="#111"/><ellipse cx="14" cy="17" rx="4.5" ry="6" fill="#fff"/><circle cx="12" cy="9" r="1.5" fill="#fff"/><circle cx="16" cy="9" r="1.5" fill="#fff"/><path d="M8 14h12l-1 3H9z" fill="#e02020"/><path d="M8 24h5v2H7zM15 24h5l1 2h-6z" fill="#f0a020"/></svg>
<svg class="a" style="left:468px;top:1047px" width="28" height="28" viewBox="0 0 28 28"><rect x="3" y="3" width="22" height="22" rx="5" fill="#fff"/><circle cx="11" cy="12" r="5" fill="none" stroke="#2e8af0" stroke-width="2.5"/><circle cx="17" cy="12" r="5" fill="none" stroke="#ef4d74" stroke-width="2.5"/><circle cx="14" cy="17" r="5" fill="none" stroke="#3ac" stroke-width="2.5"/></svg>
<svg class="a" style="left:514px;top:1047px" width="28" height="28" viewBox="0 0 28 28"><path d="M14 4a9 8 0 1 0 4 16l4 3-1-5a9 8 0 0 0-7-14z" fill="none" stroke="#2fb4f0" stroke-width="2.4"/><path d="M18 16l3 3 3-3-3-3z" fill="#f0a020"/></svg>
<svg class="a" style="left:560px;top:1047px" width="28" height="28" viewBox="0 0 28 28"><rect x="4" y="4" width="20" height="20" rx="4" fill="#1a7ff0"/><path d="M7 18l4-7 3 4 3-5 4 8z" fill="#fff"/></svg>
<svg class="a" style="left:606px;top:1047px" width="28" height="28" viewBox="0 0 28 28"><rect x="4" y="4" width="20" height="20" rx="4" fill="#2f8af5"/><path d="M8 8q8 2 12 7l-4 1 2 4q-6-3-10-12z" fill="#fff"/></svg>
<svg class="a" style="left:653px;top:1047px" width="28" height="28" viewBox="0 0 28 28"><path d="M14 3l10 4q0 13-10 18Q4 20 4 7z" fill="#1f6fe0"/><path d="M11 8h3v9h5v3h-8z" fill="#fff"/></svg>
<svg class="a" style="left:699px;top:1047px" width="28" height="28" viewBox="0 0 28 28"><path d="M6 24q-2-8 3-12l1-5 3 4h3l3-4 1 5q4 4 2 12z" fill="#23335a"/><circle cx="12" cy="16" r="0.8" fill="#9cf"/><circle cx="17" cy="16" r="0.8" fill="#9cf"/></svg>
<svg class="a" style="left:745px;top:1047px" width="28" height="28" viewBox="0 0 28 28"><path d="M4 20l8-14 12 4-7 14z" fill="#9bd0e0"/><path d="M4 20l13 4 1 2-14-4z" fill="#5a8aa0"/><path d="M12 6l12 4 0-2-11-4z" fill="#c8e8f0"/></svg>
<svg class="a" style="left:791px;top:1047px" width="28" height="28" viewBox="0 0 28 28"><rect x="6" y="4" width="14" height="21" fill="#cfcfcf"/><path d="M15 5q-6 0-5 6t-3 10" stroke="#e02020" stroke-width="2" fill="none"/><path d="M13 4h12" stroke="#e02020" stroke-width="2"/><path d="M4 25h10" stroke="#2040e0" stroke-width="2"/><path d="M10 22l4-6" stroke="#2040e0" stroke-width="1.5"/></svg>
<svg class="a" style="left:837px;top:1047px" width="28" height="28" viewBox="0 0 28 28"><circle cx="14" cy="14" r="6" fill="none" stroke="#fff" stroke-width="3.5" /><path d="M14 4v4M14 20v4M4 14h4M20 14h4M7 7l3 3M18 18l3 3M21 7l-3 3M7 21l3-3" stroke="#fff" stroke-width="3"/><circle cx="14" cy="14" r="2.6" fill="#1e2430"/></svg>
<svg class="a" style="left:883px;top:1047px" width="28" height="28" viewBox="0 0 28 28"><rect x="4" y="4" width="21" height="21" fill="#2a82d8"/><path d="M4 25l7-9 5 5 4-4 5 8z" fill="#6ab4f0"/><path d="M4 25l8-8 10 8z" fill="#1a5ea8"/><circle cx="19" cy="9" r="2" fill="#fff"/></svg>
<svg class="a" style="left:929px;top:1047px" width="28" height="28" viewBox="0 0 28 28"><rect x="4" y="3" width="21" height="22" fill="#c8141e"/><path d="M8 23l6-16 6 16h-3l-3-9-3 9z" fill="#6a0a10"/><path d="M6 21q8-4 16-2" stroke="#ff5a5a" stroke-width="1.2" fill="none"/></svg>
<svg class="a" style="left:975px;top:1047px" width="28" height="28" viewBox="0 0 28 28"><circle cx="14" cy="14" r="10" fill="#e8c890"/><circle cx="14" cy="14" r="10" fill="none" stroke="#7ab030" stroke-width="3"/><circle cx="11" cy="13" r="1.5" fill="#553"/><circle cx="17" cy="13" r="1.5" fill="#553"/><path d="M12 18h4" stroke="#c04040" stroke-width="1.5"/></svg>
<svg class="a" style="left:1020px;top:1047px" width="28" height="28" viewBox="0 0 28 28"><rect x="10" y="5" width="15" height="18" rx="1.5" fill="#41a5ee"/><rect x="10" y="10" width="15" height="9" fill="#2b7cd3"/><rect x="3" y="8" width="12" height="12" rx="1" fill="#185abd"/><path d="M5 11l1.5 7 2-5 2 5 1.5-7" stroke="#fff" stroke-width="1.2" fill="none"/></svg>
<svg class="a" style="left:1066px;top:1047px" width="28" height="28" viewBox="0 0 28 28"><rect x="4" y="4" width="20" height="20" rx="3" fill="#001e36"/><text x="14" y="19" font-family="Liberation Sans" font-weight="bold" font-size="11" fill="#31a8ff" text-anchor="middle">Ps</text></svg>
<svg class="a" style="left:1112px;top:1047px" width="28" height="28" viewBox="0 0 28 28"><rect x="4" y="4" width="20" height="20" fill="#000"/><path d="M14 5v18M5 14h18M7 7l14 14M21 7L7 21" stroke="#fff" stroke-width="1.5"/><circle cx="14" cy="14" r="2.5" fill="#fff"/></svg>
<svg class="a" style="left:1158px;top:1047px" width="28" height="28" viewBox="0 0 28 28"><rect x="4" y="4" width="20" height="20" fill="#f4f8fb"/><path d="M8 12l6-4 6 3v7l-6 4-6-3z" fill="#1b74b8"/><path d="M11 13l3-2 3 2v4l-3 2-3-2z" fill="#fff"/><path d="M12 14l2-1 2 1v2l-2 1-2-1z" fill="#1b74b8"/></svg>
<svg class="a" style="left:1382px;top:1047px" width="16" height="28" viewBox="0 0 16 28"><path d="M5 5v6M11 5v6M3 10h10v3q0 5-5 5q-5 0-5-5z" fill="#fff" stroke="#fff"/><path d="M8 18v7" stroke="#fff" stroke-width="2"/></svg>
<div class="a" style="left:1399px;top:1050px;width:40px;height:22px;border:2px solid #fff;background:#1e9a3a;color:#fff;font-size:14px;line-height:18px;text-align:center">98%</div><div class="a" style="left:1439px;top:1056px;width:3px;height:10px;background:#fff"></div>
<svg class="a" style="left:1450px;top:1052px" width="18" height="18" viewBox="0 0 18 18"><path d="M3 12l6-6 6 6" stroke="#fff" stroke-width="1.5" fill="none"/></svg>
<svg class="a" style="left:1474px;top:1047px" width="28" height="28" viewBox="0 0 28 28"><ellipse cx="14" cy="15" rx="7" ry="9" fill="#111"/><ellipse cx="14" cy="17" rx="4.5" ry="6" fill="#fff"/><circle cx="12" cy="9" r="1.5" fill="#fff"/><circle cx="16" cy="9" r="1.5" fill="#fff"/><path d="M8 14h12l-1 3H9z" fill="#e02020"/><path d="M8 24h5v2H7zM15 24h5l1 2h-6z" fill="#f0a020"/></svg>
<svg class="a" style="left:1506px;top:1047px" width="28" height="28" viewBox="0 0 28 28"><path d="M6 25q-2-10 2-14l1-6 4 4h4l4-4 1 6q3 4 2 14z" fill="#e6c89a"/><path d="M4 24q-3-4 2-6" stroke="#e6c89a" stroke-width="2" fill="none"/></svg>
<svg class="a" style="left:1535px;top:1047px" width="28" height="28" viewBox="0 0 28 28"><path d="M14 4l9 3q0 12-9 17Q5 19 5 7z" fill="#fff"/><path d="M14 4v20M5 13h18" stroke="#1a1a2a" stroke-width="1.4"/><circle cx="19" cy="20" r="5" fill="#1ea04a"/><path d="M16.5 20l2 2 3-3.5" stroke="#fff" stroke-width="1.4" fill="none"/></svg>
<svg class="a" style="left:1565px;top:1047px" width="28" height="28" viewBox="0 0 28 28"><rect x="7" y="3" width="14" height="22" rx="7" fill="#1e88e5"/><path d="M10 10l8 7-4 4V7l4 4-8 7" stroke="#fff" stroke-width="1.4" fill="none"/></svg>
<svg class="a" style="left:1594px;top:1047px" width="28" height="28" viewBox="0 0 28 28"><rect x="6" y="9" width="17" height="10" fill="none" stroke="#fff" stroke-width="1.5"/><rect x="8" y="11" width="13" height="6" fill="#fff"/><rect x="23" y="12" width="2" height="4" fill="#fff"/><path d="M3 5v5M5 5v5" stroke="#fff"/></svg>
<svg class="a" style="left:1626px;top:1047px" width="28" height="28" viewBox="0 0 28 28"><path d="M4 24q0-12 14-16M8 24q0-8 10-12M12 24q0-4 6-7" stroke="#ddd" stroke-width="1.4" fill="none"/><circle cx="18" cy="23" r="1.6" fill="#fff"/></svg>
<svg class="a" style="left:1654px;top:1047px" width="28" height="28" viewBox="0 0 28 28"><path d="M3 11h4l6-5v16l-6-5H3z" fill="none" stroke="#fff" stroke-width="1.3"/><path d="M16 10l7 8M23 10l-7 8" stroke="#fff" stroke-width="1.3"/></svg>
<svg class="a" style="left:1687px;top:1047px" width="32" height="28" viewBox="0 0 32 28"><rect x="2" y="7" width="28" height="15" fill="none" stroke="#fff" stroke-width="1.3"/><path d="M5 11h22M5 14h22" stroke="#fff" stroke-width="1.2" stroke-dasharray="1.5 1.5"/><path d="M8 18h16" stroke="#fff" stroke-width="1.3"/></svg>
<svg class="a" style="left:1723px;top:1047px" width="26" height="28" viewBox="0 0 26 28"><path d="M4 9h18v9H4z" fill="none" stroke="#fff" stroke-width="2"/><path d="M13 3v22" stroke="#fff" stroke-width="2"/></svg>
<svg class="a" style="left:1757px;top:1047px" width="28" height="28" viewBox="0 0 28 28"><path d="M5 8l16-4 3 16-16 4z" fill="#f0582a"/><path d="M18 9q-5-2-7 1t4 3q5 2 1 5q-3 2-7-1" stroke="#fff" stroke-width="2.5" fill="none"/></svg>
<div class="t" style="left:1806px;top:1053px;font-size:15px;color:#fff">18:32</div>
<svg class="a" style="left:1865px;top:1047px" width="28" height="28" viewBox="0 0 28 28"><path d="M5 6h19v15h-8l-2 3-2-3H5z" fill="none" stroke="#fff" stroke-width="1.4"/></svg>
<div class="a" style="left:1915px;top:1044px;width:1px;height:36px;background:#777"></div>
</body></html>
